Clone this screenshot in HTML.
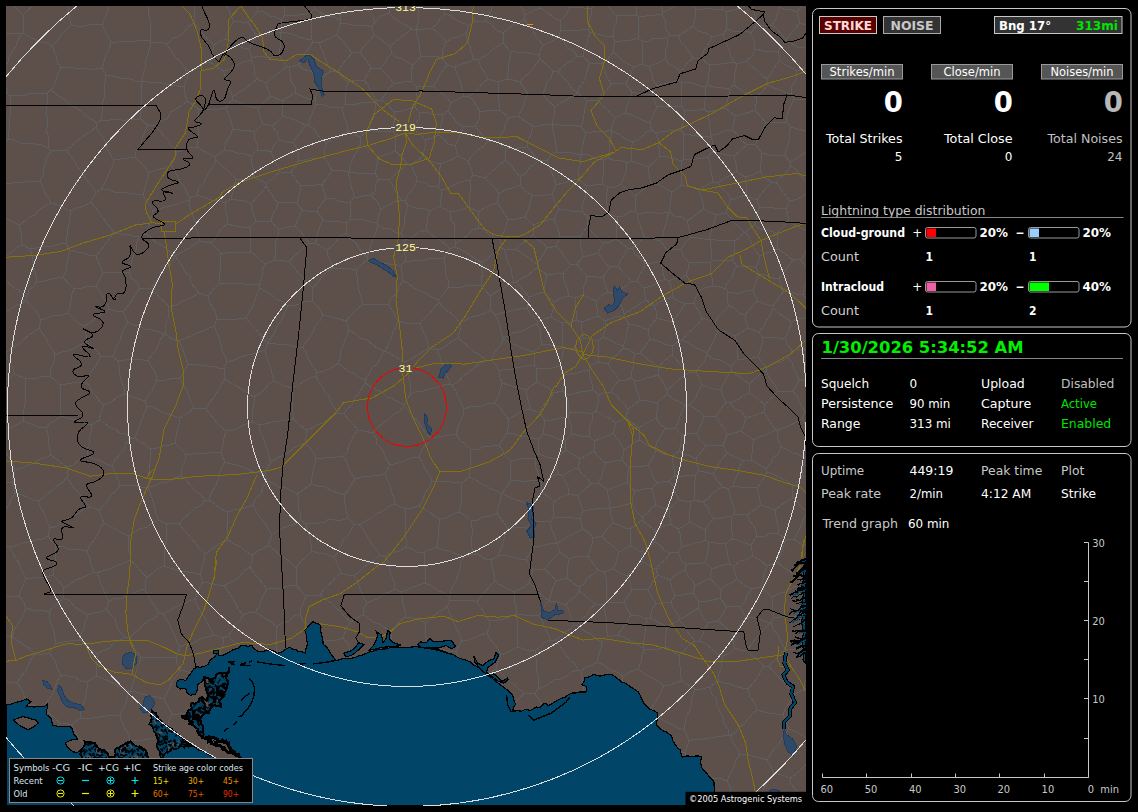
<!DOCTYPE html><html><head><meta charset="utf-8"><title>Lightning Monitor</title>
<style>html,body{margin:0;padding:0;background:#000;overflow:hidden}svg{display:block}text{font-family:"DejaVu Sans","Liberation Sans",sans-serif}.b{font-family:"DejaVu Sans Condensed","DejaVu Sans","Liberation Sans",sans-serif;font-weight:bold}.m{font-family:"Liberation Mono","DejaVu Sans Mono",monospace}.t{font-family:"DejaVu Sans Condensed","Liberation Sans",sans-serif}</style></head><body>
<svg width="1138" height="812" viewBox="0 0 1138 812">
<rect width="1138" height="812" fill="#000"/>
<defs><clipPath id="mc"><rect x="6" y="6" width="800" height="800"/></clipPath>
<pattern id="m1" width="24" height="24" patternUnits="userSpaceOnUse"><rect width="24" height="24" fill="#000"/><path d="M7.8 3.6l0.9 -2.6l0.2 -0.5z" fill="#5d4f4a" stroke="#5d4f4a" stroke-width="1.2"/><path d="M1.4 12.2l-2.8 -0.4l-2.6 -1.6z" fill="#5d4f4a" stroke="#5d4f4a" stroke-width="1.2"/><path d="M10.2 19.8l-2.3 -1.7l0.8 1.8z" fill="#5d4f4a" stroke="#5d4f4a" stroke-width="1.2"/><path d="M13.9 9.5l2.9 -2.7l2.2 -0.8z" fill="#5d4f4a" stroke="#5d4f4a" stroke-width="1.2"/><path d="M3.5 2.8l-1.1 1.9l-1.9 0.3z" fill="#5d4f4a" stroke="#5d4f4a" stroke-width="1.2"/><path d="M15.3 8.9l0.3 -2.6l-2.6 -1.2z" fill="#5d4f4a" stroke="#5d4f4a" stroke-width="1.2"/><path d="M16.3 10.3l-1.1 0.5l-0.3 -0.8z" fill="#5d4f4a" stroke="#5d4f4a" stroke-width="1.2"/><path d="M19.1 16.8l-1.5 0.4l0.2 1.5z" fill="#5d4f4a" stroke="#5d4f4a" stroke-width="1.2"/><path d="M17.5 6.9l2.9 -2.3l-0.5 1.0z" fill="#5d4f4a" stroke="#5d4f4a" stroke-width="1.2"/><path d="M3.6 11.7l-2.8 1.0l1.6 0.3z" fill="#014569" stroke="#014569" stroke-width="1.2"/><path d="M21.0 7.5l1.2 0.6l0.5 -0.2z" fill="#014569" stroke="#014569" stroke-width="1.2"/><path d="M20.2 22.7l-0.2 1.0l-2.6 0.8z" fill="#014569" stroke="#014569" stroke-width="1.2"/><path d="M15.5 23.8l1.9 -1.3l-0.7 0.7z" fill="#014569" stroke="#014569" stroke-width="1.2"/><path d="M0.5 11.1l-2.0 -2.3l-2.6 1.1z" fill="#014569" stroke="#014569" stroke-width="1.2"/><path d="M3.1 5.9l-0.7 2.2l-2.5 -0.2z" fill="#014569" stroke="#014569" stroke-width="1.2"/><path d="M13.2 21.2l1.9 2.2l-1.3 -0.3z" fill="#014569" stroke="#014569" stroke-width="1.2"/><path d="M8.6 21.2l2.7 -2.1l-1.9 -1.1z" fill="#014569" stroke="#014569" stroke-width="1.2"/><path d="M5.6 11.6l0.5 -1.4l-3.0 -0.3z" fill="#014569" stroke="#014569" stroke-width="1.2"/><path d="M8.9 13.6l2.7 1.1l0.1 0.5z" fill="#014569" stroke="#014569" stroke-width="1.2"/><path d="M16.2 1.3l2.4 1.7l2.2 1.2z" fill="#014569" stroke="#014569" stroke-width="1.2"/><path d="M9.4 9.6l-2.4 0.8l-2.6 -1.7z" fill="#014569" stroke="#014569" stroke-width="1.2"/><path d="M5.0 3.9l-1.0 -2.7l-3.0 -1.4z" fill="#014569" stroke="#014569" stroke-width="1.2"/><path d="M2.4 8.7l-2.8 2.2l0.7 -1.4z" fill="#014569" stroke="#014569" stroke-width="1.2"/><path d="M6.1 8.3l-0.8 -2.3l2.1 2.0z" fill="#014569" stroke="#014569" stroke-width="1.2"/><path d="M11.2 11.6l-2.5 -2.4l-0.9 -0.9z" fill="#014569" stroke="#014569" stroke-width="1.2"/><path d="M19.9 3.9l-2.9 2.7l0.2 -1.4z" fill="#014569" stroke="#014569" stroke-width="1.2"/><path d="M13.0 0.6l0.2 2.9l2.2 0.8z" fill="#014569" stroke="#014569" stroke-width="1.2"/><path d="M6.3 8.8l-2.0 1.6l0.2 1.1z" fill="#014569" stroke="#014569" stroke-width="1.2"/><path d="M7.9 5.4l1.9 2.9l2.1 1.2z" fill="#014569" stroke="#014569" stroke-width="1.2"/><path d="M19.6 17.8l-1.6 0.1l-0.9 -1.9z" fill="#014569" stroke="#014569" stroke-width="1.2"/><path d="M0.7 6.7l-1.4 1.2l2.7 -0.2z" fill="#014569" stroke="#014569" stroke-width="1.2"/><path d="M22.5 23.7l2.7 -0.8l-1.7 -1.1z" fill="#014569" stroke="#014569" stroke-width="1.2"/><path d="M4.7 4.9l0.7 2.4l2.0 -0.1z" fill="#014569" stroke="#014569" stroke-width="1.2"/><path d="M15.7 19.2l-2.5 1.0l2.5 1.1z" fill="#014569" stroke="#014569" stroke-width="1.2"/><path d="M18.0 11.5l-1.9 1.7l-1.0 1.2z" fill="#014569" stroke="#014569" stroke-width="1.2"/><path d="M23.3 9.5l-0.6 2.7l1.3 -1.3z" fill="#014569" stroke="#014569" stroke-width="1.2"/><path d="M3.0 3.6l2.4 1.8l-2.1 1.3z" fill="#014569" stroke="#014569" stroke-width="1.2"/><path d="M23.5 15.8l-0.9 0.3l-2.2 -1.9z" fill="#014569" stroke="#014569" stroke-width="1.2"/><path d="M23.3 15.6l0.2 2.6l-0.4 1.5z" fill="#014569" stroke="#014569" stroke-width="1.2"/><path d="M19.8 5.1l-1.5 -1.2l-1.6 0.3z" fill="#014569" stroke="#014569" stroke-width="1.2"/><path d="M6.2 10.1l-2.2 2.5l-0.9 -0.2z" fill="#014569" stroke="#014569" stroke-width="1.2"/><path d="M14.0 21.7l-0.5 2.5l0.0 0.1z" fill="#014569" stroke="#014569" stroke-width="1.2"/><path d="M12.6 0.4l-0.4 -1.9l-3.0 1.2z" fill="#014569" stroke="#014569" stroke-width="1.2"/><path d="M4.1 11.4l1.4 0.3l-1.0 0.1z" fill="#014569" stroke="#014569" stroke-width="1.2"/><path d="M13.3 18.8l-2.4 0.4l-1.5 -0.9z" fill="#014569" stroke="#014569" stroke-width="1.2"/><path d="M18.5 12.2l0.4 1.6l2.5 -0.2z" fill="#014569" stroke="#014569" stroke-width="1.2"/><path d="M14.7 12.1l0.1 1.2l-0.3 0.1z" fill="#014569" stroke="#014569" stroke-width="1.2"/><path d="M11.5 22.6l1.2 2.3l2.7 -1.0z" fill="#014569" stroke="#014569" stroke-width="1.2"/><path d="M13.4 22.6l2.0 -2.2l-2.3 -0.2z" fill="#014569" stroke="#014569" stroke-width="1.2"/><path d="M1.7 5.8l-2.6 1.0l1.7 1.6z" fill="#014569" stroke="#014569" stroke-width="1.2"/><path d="M3.7 17.2l1.0 -2.1l2.3 1.9z" fill="#014569" stroke="#014569" stroke-width="1.2"/></pattern>
<pattern id="m2" width="24" height="24" patternUnits="userSpaceOnUse"><rect width="24" height="24" fill="#014569"/><path d="M5.3 22.9l-0.6 -0.1l2.9 1.3z" fill="#5d4f4a" stroke="#5d4f4a" stroke-width="1.2"/><path d="M3.9 10.4l0.1 -1.0l-1.8 -0.7z" fill="#5d4f4a" stroke="#5d4f4a" stroke-width="1.2"/><path d="M17.3 0.5l0.3 -0.4l-2.9 -0.7z" fill="#5d4f4a" stroke="#5d4f4a" stroke-width="1.2"/><path d="M15.0 12.3l-2.6 2.9l1.7 1.9z" fill="#5d4f4a" stroke="#5d4f4a" stroke-width="1.2"/><path d="M2.5 6.4l-2.8 1.7l-1.4 -1.5z" fill="#5d4f4a" stroke="#5d4f4a" stroke-width="1.2"/><path d="M10.1 21.9l1.9 -1.4l-2.1 1.7z" fill="#5d4f4a" stroke="#5d4f4a" stroke-width="1.2"/><path d="M13.7 16.8l-2.5 -2.7l1.1 -0.3z" fill="#5d4f4a" stroke="#5d4f4a" stroke-width="1.2"/><path d="M1.7 22.5l0.8 1.8l-2.5 1.4z" fill="#5d4f4a" stroke="#5d4f4a" stroke-width="1.2"/><path d="M1.6 20.7l-0.3 -1.0l0.3 1.7z" fill="#5d4f4a" stroke="#5d4f4a" stroke-width="1.2"/><path d="M6.4 3.1l0.2 -1.6l-2.3 -1.4z" fill="#5d4f4a" stroke="#5d4f4a" stroke-width="1.2"/><path d="M1.2 4.8l-1.1 -1.2l1.6 -0.8z" fill="#5d4f4a" stroke="#5d4f4a" stroke-width="1.2"/><path d="M12.0 4.3l-0.9 -2.9l-1.5 -1.9z" fill="#5d4f4a" stroke="#5d4f4a" stroke-width="1.2"/><path d="M17.6 13.2l-1.9 -0.2l2.6 -1.6z" fill="#5d4f4a" stroke="#5d4f4a" stroke-width="1.2"/><path d="M19.7 10.4l-0.0 2.0l-0.6 0.0z" fill="#5d4f4a" stroke="#5d4f4a" stroke-width="1.2"/><path d="M16.5 23.6l-0.8 1.7l1.0 0.7" fill="none" stroke="#000" stroke-width="1.5"/><path d="M9.7 8.3l-2.2 -1.9l-2.1 1.2" fill="none" stroke="#000" stroke-width="1.5"/><path d="M6.1 3.9l-2.1 1.7l1.9 0.9" fill="none" stroke="#000" stroke-width="1.5"/><path d="M6.8 5.8l-1.0 -0.2l-1.7 -0.3" fill="none" stroke="#000" stroke-width="1.5"/><path d="M6.3 23.1l2.4 0.2l-1.3 2.3" fill="none" stroke="#000" stroke-width="1.5"/><path d="M7.4 8.6l-2.5 -0.6l-0.1 0.0" fill="none" stroke="#000" stroke-width="1.5"/><path d="M4.8 12.1l-2.5 -1.2l-2.1 -0.5" fill="none" stroke="#000" stroke-width="1.5"/><path d="M1.0 0.5l-1.0 -1.3l0.4 0.1" fill="none" stroke="#000" stroke-width="1.5"/><path d="M18.0 15.8l1.1 1.9l-0.6 -0.9" fill="none" stroke="#000" stroke-width="1.5"/><path d="M23.6 3.6l1.1 0.7l-2.3 1.7" fill="none" stroke="#000" stroke-width="1.5"/><path d="M21.4 15.1l1.2 1.6l-1.8 0.1" fill="none" stroke="#000" stroke-width="1.5"/><path d="M12.1 20.0l1.5 1.6l0.4 2.0" fill="none" stroke="#000" stroke-width="1.5"/><path d="M16.4 16.6l-1.4 -2.3l-1.8 -0.7" fill="none" stroke="#000" stroke-width="1.5"/><path d="M2.5 20.1l0.3 0.6l0.6 0.9" fill="none" stroke="#000" stroke-width="1.5"/><path d="M11.7 0.1l1.5 1.2l0.0 0.2" fill="none" stroke="#000" stroke-width="1.5"/><path d="M15.8 1.6l1.2 -1.2l-2.1 -1.2" fill="none" stroke="#000" stroke-width="1.5"/><path d="M17.5 4.9l1.2 2.4l-0.0 -0.6" fill="none" stroke="#000" stroke-width="1.5"/><path d="M11.5 16.4l1.3 0.6l0.7 -2.1" fill="none" stroke="#000" stroke-width="1.5"/><path d="M3.5 6.1l1.2 -1.0l0.3 -2.4" fill="none" stroke="#000" stroke-width="1.5"/><path d="M1.5 6.5l0.9 1.0l0.9 -1.0" fill="none" stroke="#000" stroke-width="1.5"/><path d="M12.4 11.2l-0.2 -1.9l2.0 -1.5" fill="none" stroke="#000" stroke-width="1.5"/><path d="M23.5 22.5l-2.4 -0.2l1.6 2.3" fill="none" stroke="#000" stroke-width="1.5"/><path d="M10.8 6.4l-1.5 2.2l-1.4 0.4" fill="none" stroke="#000" stroke-width="1.5"/><path d="M3.4 12.6l2.3 -1.8l1.6 0.0" fill="none" stroke="#000" stroke-width="1.5"/><path d="M21.3 16.9l-1.3 2.0l-0.1 -2.4" fill="none" stroke="#000" stroke-width="1.5"/><path d="M0.1 11.8l-0.2 -1.0l-1.8 -0.8" fill="none" stroke="#000" stroke-width="1.5"/><path d="M7.6 20.2l-2.5 1.3l1.7 -1.9" fill="none" stroke="#000" stroke-width="1.5"/><path d="M22.2 17.1l2.0 -1.1l-0.6 -0.5" fill="none" stroke="#000" stroke-width="1.5"/><path d="M24.0 14.1l-0.7 -0.4l-1.1 -2.3" fill="none" stroke="#000" stroke-width="1.5"/><path d="M2.4 20.0l-1.1 2.2l-1.3 -1.2" fill="none" stroke="#000" stroke-width="1.5"/><path d="M12.3 4.6l-0.6 2.3l1.9 1.6" fill="none" stroke="#000" stroke-width="1.5"/><path d="M15.1 21.9l2.2 0.2l1.1 -2.3" fill="none" stroke="#000" stroke-width="1.5"/><path d="M17.6 10.8l1.3 0.7l-1.1 -2.3" fill="none" stroke="#000" stroke-width="1.5"/><path d="M22.2 3.1l-0.1 -0.8l-1.0 1.2" fill="none" stroke="#000" stroke-width="1.5"/><path d="M23.4 6.2l0.8 -1.0l0.3 -0.5" fill="none" stroke="#000" stroke-width="1.5"/><path d="M4.0 3.9l-1.5 2.0l-0.0 -1.4" fill="none" stroke="#000" stroke-width="1.5"/><path d="M21.8 23.9l-0.3 -1.8l-1.5 -2.0" fill="none" stroke="#000" stroke-width="1.5"/><path d="M8.2 2.2l-1.3 -1.2l0.3 1.9" fill="none" stroke="#000" stroke-width="1.5"/><path d="M18.0 9.9l-0.4 0.1l-0.6 -0.8" fill="none" stroke="#000" stroke-width="1.5"/><path d="M1.5 6.7l2.3 -1.9l0.0 0.6" fill="none" stroke="#000" stroke-width="1.5"/><path d="M20.7 5.2l-1.1 -1.3l-0.5 -0.3" fill="none" stroke="#000" stroke-width="1.5"/><path d="M22.9 20.4l1.9 -2.4l-2.3 1.0" fill="none" stroke="#000" stroke-width="1.5"/><path d="M21.5 11.4l0.4 -2.5l-0.5 2.1" fill="none" stroke="#000" stroke-width="1.5"/><path d="M19.8 20.5l2.4 -1.3l-2.0 -1.7" fill="none" stroke="#000" stroke-width="1.5"/><path d="M12.5 16.4l2.2 1.1l0.7 1.3" fill="none" stroke="#000" stroke-width="1.5"/><path d="M11.0 13.2l-2.3 1.4l-1.3 2.1" fill="none" stroke="#000" stroke-width="1.5"/><path d="M15.5 7.3l-1.9 -1.2l0.7 1.0" fill="none" stroke="#000" stroke-width="1.5"/><path d="M2.7 1.7l0.1 0.4l-0.6 -1.4" fill="none" stroke="#000" stroke-width="1.5"/><path d="M14.4 0.3l-1.0 -0.2l2.3 0.7" fill="none" stroke="#000" stroke-width="1.5"/><path d="M21.2 11.4l-1.3 -1.3l2.3 1.0" fill="none" stroke="#000" stroke-width="1.5"/><path d="M7.4 0.5l-0.0 0.9l-0.4 -1.2" fill="none" stroke="#000" stroke-width="1.5"/><path d="M16.0 22.2l-1.4 -2.3l-0.8 -0.4" fill="none" stroke="#000" stroke-width="1.5"/><path d="M16.4 4.8l1.5 1.2l0.0 -1.5" fill="none" stroke="#000" stroke-width="1.5"/><path d="M23.3 7.5l1.6 -1.3l-1.4 1.3" fill="none" stroke="#000" stroke-width="1.5"/><path d="M7.1 22.8l-0.0 -1.6l-1.4 -0.4" fill="none" stroke="#000" stroke-width="1.5"/><path d="M16.0 22.8l-1.8 -0.5l-1.4 2.4" fill="none" stroke="#000" stroke-width="1.5"/><path d="M3.4 1.2l-2.2 -0.5l2.0 1.9" fill="none" stroke="#000" stroke-width="1.5"/><path d="M17.6 23.9l2.2 -0.9l-1.6 2.2" fill="none" stroke="#000" stroke-width="1.5"/><path d="M17.9 0.8l0.8 -0.6l-0.6 -0.8" fill="none" stroke="#000" stroke-width="1.5"/><path d="M4.1 0.1l-1.1 -0.7l2.3 -1.9" fill="none" stroke="#000" stroke-width="1.5"/></pattern>
</defs>
<g clip-path="url(#mc)" shape-rendering="crispEdges">
<rect x="6" y="6" width="800" height="800" fill="#5d4f4a"/>
<path d="M56 644L49 653M56 644L55 638L54 632L52 626L49 619L49 612M49 653L43 654L35 654M35 654L30 649L24 645L18 641L12 637M12 637L14 630L17 626L21 619L24 613L26 608M49 612L42 610L33 610L26 608M30 704L25 708L22 713L16 718L12 722L8 726M30 704L26 700L24 695L21 688L17 683M17 683L9 682L2 681L-5 681L-12 680M-4 724L8 726M35 654L30 661L28 666L25 672L20 678L17 683M12 637L5 636L-2 638M-8 265L-1 261L3 259L7 255L12 252L17 247L23 245M-1 212L5 218L11 221L19 225M19 225L21 233L21 238L23 245M-1 183L6 183L12 183L20 182L25 182L32 181L40 181M40 181L43 187L45 193L48 197L51 203M51 203L45 206L39 210L35 215L29 217L25 221L19 225M26 608L23 601L19 596M19 596L13 597L7 596L-0 597L-6 596L-11 596M-17 557L-11 554L-5 553L-0 549L5 546M5 546L9 547M19 596L21 590L23 585L26 579M9 547L12 552L16 559L19 563L21 569L23 573L26 579M90 507L84 509L78 514L74 516L67 519L61 522L57 526L50 528M90 507L86 503L83 498L79 493L74 488L70 482L67 477M67 477L63 482L57 486L53 490L47 494L43 498L38 501M50 528L47 522L45 515L41 508L38 501M23 421L31 424L38 427L46 428M23 421L18 424L13 427L6 428M51 455L50 449L48 443L48 435L46 428M51 455L45 458L40 459L34 463L28 465L22 468L15 470M6 428L0 438M15 470L13 464L8 456L6 451L3 445L0 438M6 428L3 422L-1 417L-5 412L-8 406L-12 401L-14 396M0 438L-8 440L-16 442M158 824L165 821L170 819L176 815L183 812L189 810L196 806M196 806L197 811L199 818L200 825L202 833L204 838L205 845L206 851L208 858M86 791L94 792L102 795L109 795M86 791L82 797L79 802L74 809L71 815L68 822M117 821L115 815L113 808L111 801L109 795M211 713L214 706L216 702L216 694L218 688M211 713L206 713L198 713L193 713L185 713L178 714L172 714M172 714L168 706L164 699M180 670L177 676L172 681L170 688L167 693L164 699M180 670L185 671L193 674L198 676L203 679L209 680L215 683M215 683L218 688M-24 748L-19 752L-14 756L-10 762L-4 766L1 771M8 726L12 733L14 739L18 747M18 747L14 754L10 759L4 765L1 771M128 779L135 781L142 783L148 785M128 779L127 773L126 764L126 757L124 751M148 785L154 783L160 781L167 777M124 751L130 741M130 741L137 740L143 740L151 738L156 738L163 737M167 777L169 771L169 765L172 758L173 752M163 737L166 743L170 748L173 752M154 823L152 817L153 811L151 803L151 797L149 792L148 785M109 795L114 790L118 788L123 783L128 779M86 791L81 783L77 777M77 777L79 769L80 763L82 756L85 750M85 750L92 751L99 750L105 750L111 751L119 750L124 751M196 806L198 801M198 801L192 798L187 793L182 790L177 785L172 781L167 777M172 714L169 720L168 725L165 731L163 737M164 699L157 697L150 696L142 694L136 692L130 691M130 691L129 691M120 715L123 709L126 703L127 698L129 691M120 715L122 722L124 727L129 735L130 741M206 752L209 757L214 764L216 770M206 752L200 752L193 752L186 752L180 752L173 752M216 770L215 777L214 786L212 793M212 793L205 797L198 801M211 713L216 722M216 722L215 728L213 735L211 740L207 745L206 752M180 670L177 663L176 658M130 691L133 684L135 676L136 672L139 664L141 657M176 658L169 657L161 657L154 657L149 657L141 657M56 644L63 642L70 641L79 640M49 612L53 607L58 604L63 598M79 640L81 634L84 628L85 622L88 615M88 615L81 611L75 607L70 601L63 598M61 675L67 676L74 677L81 681L88 681M61 675L57 681L55 688L52 695L48 700L45 707M88 681L87 688L86 694L85 699L82 707L81 711L80 718M45 707L50 714L55 718L60 724M60 724L65 723L72 725M72 725L80 718M49 653L53 658L56 663L57 668L61 675M79 640L85 643L91 649L98 654M98 654L97 660L96 669L97 676M97 676L88 681M30 704L37 706L45 707M97 676L104 679L109 681L116 685L124 688L129 691M120 715L114 715L106 716L100 717L93 718L87 719L80 718M40 749L32 748L26 747L18 747M40 749L43 744L47 740L53 733L55 728L60 724M77 777L69 776L62 776L55 774L48 775M85 750L83 743L78 737L75 731L72 725M40 749L42 755L45 762L47 769L48 775M825 512L817 512L808 512M808 512L802 508L798 503L793 498M830 483L824 482L816 480L810 477L803 476M793 498L792 491L793 486M803 476L798 481L793 486M810 151L816 153L822 157M810 151L810 145L807 137L806 131M806 131L817 126M-8 152L-4 147L4 144L8 139M-48 110L-42 107L-36 106L-30 103L-23 103L-17 100L-11 98L-5 97L2 96L7 93M7 93L10 96M8 139L8 133L10 127L9 120L10 115L10 109L10 101L10 96M7 93L6 87L3 81L2 74M-40 53L-35 56L-28 60L-23 61L-17 64L-10 68L-4 70L2 74M526 390L520 388L515 387L509 385L502 383M526 390L527 396L529 403L529 409M529 409L521 412L514 416L508 419M508 419L504 413L500 408L495 403M495 403L498 397L500 390L502 383M212 793L217 795L222 799L227 801L233 803L238 806L244 809M249 821L246 815L244 809M15 493L12 482M15 493L11 500L9 505L5 510L1 515M12 482L5 482L-2 481L-7 480L-15 478L-22 478L-27 479L-34 477L-41 477M1 515L-4 513L-11 511L-17 511L-22 510L-29 508L-35 506L-42 505L-47 503L-53 502L-60 499L-66 498L-72 498L-78 496M67 467L63 464L56 459L51 455M67 467L67 477M38 501L33 500L27 497L22 495L15 493M15 470L13 475L12 482M5 546L4 541L3 534L3 527L1 521L1 515M48 536L43 539L36 540L29 542L23 543L15 546L9 547M48 536L50 528M128 536L135 532L139 529L147 527L152 523L159 520M128 536L122 533L117 530L109 526L104 523M104 523L102 518L99 510M99 510L103 506L108 501L111 495L117 490L120 485M120 485L126 485L134 485L141 487L148 487M159 520L156 514L155 508L153 501L151 495L148 487M67 467L74 465L79 459L87 456M46 428L50 423L56 420L61 416M61 416L67 418L72 419L79 421L84 423L91 425M87 456L87 450L89 444L90 436L91 432L91 425M90 507L99 510M120 485L117 478L115 472L112 466M87 456L94 459L99 460L106 464L112 466M243 615L240 620L235 625L232 631L228 636M243 615L248 613L255 612M228 636L232 640L237 643L242 648L249 652L253 656L257 659L263 663M276 627L272 622L266 619L260 615L255 612M276 627L276 635L276 642L276 651M276 651L269 658L263 663M-2 788L1 794L4 800L10 806L13 811L16 818M-2 788L2 781M2 781L8 782L15 782L22 782L28 781L34 783L41 782M41 782L41 790L42 797L41 804L42 810L42 816M1 771L2 781M48 775L41 782M125 637L120 632L117 627L115 619L110 614L106 609M125 637L130 638M130 638L134 633L140 629L143 625L148 621L155 618L159 612M109 602L106 609M109 602L114 598L122 599L127 595L132 594L140 590L145 589M145 589L148 595L151 601L155 607L159 612M98 654L102 651L110 648L113 643L120 640L125 637M88 615L93 613L100 612L106 609M141 657L136 651L133 645L130 638M130 560L136 565L141 572L147 577M130 560L122 564L116 566L110 569L102 571L97 573M147 577L145 583L145 589M97 573L99 578L101 584L104 591L106 596L109 602M56 546L55 554L55 562L53 567L53 575M56 546L63 546L68 549L75 549L82 550L87 551M87 551L90 559L91 565L94 572M94 572L88 575L82 578L75 580L70 584L64 588M53 575L59 581L64 588M48 536L52 542L56 546M26 579L33 578L40 577L46 577L53 575M104 523L100 528L98 534L95 539L90 545L87 551M130 560L130 554L128 547L129 542L128 536M97 573L94 572M63 598L64 588M830 796L825 799L818 803L811 807M811 807L815 814L818 820L822 826L823 833L827 839M802 806L811 807M802 806L799 800L797 796L796 790L791 784L790 778M819 755L815 758L810 762L804 766L800 771L796 774L790 778M802 806L797 810L792 815L787 817L783 821M790 778L782 775L774 773M757 817L753 807M774 773L770 779L767 783L763 790L760 795L757 802L753 807M808 512L804 517L802 523L800 528L797 534L794 539M794 539L801 544L806 545L813 550M716 416L704 416M716 416L719 422L724 428L727 435M704 416L702 422L700 427L697 433M727 435L723 445M723 445L715 445L706 446M697 433L700 440L706 446M802 419L796 422L789 426L783 428L777 430M802 419L805 424L807 429L810 434L814 440L817 446M817 446L811 451L804 458M804 458L798 454L793 453L788 450L781 447M781 447L778 439L777 430M827 406L819 407L813 409L805 411M805 411L802 419M803 476L802 470L804 465L804 458M793 486L787 481L781 478L773 474L767 472M766 469L767 472M766 469L771 463L773 458L778 454L781 447M766 469L758 464L751 460M751 460L752 454L752 447L754 440M776 430L772 432L766 435L759 437L754 440M776 430L777 430M793 391L798 398L801 406L805 411M793 391L796 386L799 381M799 381L806 379L812 376L820 374M696 9L689 -0M696 9L703 9L708 8L716 10L723 9M722 -13L722 -5L722 1L723 9M806 131L797 129L791 127M791 127L786 122M819 98L813 99L806 99L799 99L794 99M786 122L787 115L789 110L791 105L794 99M823 80L818 75L813 71L807 67M807 67L797 71M797 71L796 79L792 86L791 94M794 99L791 94M51 203L58 205L64 208L70 211M23 245L30 249M70 211L70 217L69 224L68 229L67 236L66 243M66 243L60 244L53 246L48 246L42 247L36 248L30 249M395 589L394 582L391 575L390 570L388 562L385 557M395 589L390 592L383 594L379 598L372 601L367 603M354 576L357 581L359 586L361 591L364 598L367 603M354 576L359 572L364 567L370 563L375 560L380 555M380 555L385 557M406 547L399 551L391 553L385 557M406 547L406 540L405 533L406 527L405 521L406 515L405 509M359 525L363 529L367 536L370 541L373 546L377 550L380 555M359 525L364 522L373 517L376 514L383 511L388 507L395 504M395 504L405 509M358 430L354 435L351 441L349 445L347 452L343 456M358 430L353 424L348 419L344 414M338 413L344 414M338 413L333 415L327 420L323 423L317 425L312 428L306 430M343 456L337 457L330 457L324 458L316 458M316 458L313 452L309 447L305 443M305 443L306 437L306 430M373 433L364 431L358 430M373 433L376 438L377 444L381 448L384 453L386 459L390 465M355 479L351 473L349 469L347 462L343 456M355 479L362 477L366 476L372 476L380 475L385 474M385 474L390 465M344 495L339 493L332 491L325 487L318 486L311 484M344 495L349 489L351 485L355 479M311 484L312 477L313 471L315 463L316 458M271 462L277 458L282 456L289 452L294 448L300 445L305 443M271 462L269 457L267 449L265 443L263 437L260 431L259 425M259 425L265 424L272 422L279 421L287 420L293 419M293 419L299 424L306 430M553 393L562 391M553 393L549 388L542 385L537 382M562 391L564 383L565 375M537 368L536 376L537 382M537 368L544 368L552 368L560 366M560 366L565 375M540 413L542 407L546 402L551 398L553 393M540 413L529 409M526 390L531 386L537 382M593 390L592 384L590 377L589 370M593 390L587 391L580 392L573 394L566 394M566 394L562 391M589 370L582 371L577 373L570 374L565 375M635 354L630 350L623 348M635 354L633 360L634 365L631 372L631 378M623 348L618 354L612 358L608 364M608 364L611 369L616 375L619 380M619 380L626 380L631 378M640 353L645 357L649 360L654 364L659 367M640 353L635 354M659 367L658 375M658 375L651 377L646 378L641 380L634 380M631 378L634 380M502 383L500 378L499 371M537 368L534 365M499 371L507 369L513 369L520 367L526 366L534 365M542 344L550 345L555 346L562 347M542 344L534 352M562 347L564 349M564 349L562 358L560 366M534 365L534 358L534 352M216 722L221 725L229 725L234 727L240 729L247 729L252 732L258 733M216 770L222 769L228 766L235 764L242 762L250 761L256 759M256 759L256 752L256 745L257 740L258 733M244 809L247 803L251 797L256 792L260 787L263 780L266 775M256 759L259 764L262 769L266 775M-8 318L-2 315L2 311L10 310L15 306L22 303L26 300M-7 271L-2 275L2 277L7 282L11 285L16 289L23 293L27 297M27 297L26 300M30 249L32 256L33 262L34 268L36 276L37 281M37 281L34 286L29 290L27 297M147 577L153 573L157 569L164 566M159 520L167 524M167 524L166 530L167 536L166 543L165 549L164 554L165 561L164 566M167 524L179 523M179 523L183 529L188 534L191 538L196 544L200 549L205 554M164 566L170 568L176 570L182 571L188 572L194 573L200 575M205 554L204 561L202 567L200 575M293 419L293 413L292 406L293 399L292 394L292 388M338 413L334 407L331 402L329 396L325 392L322 386L318 381L316 376M292 388L299 385L303 382L310 378L316 376M150 449L157 448L163 446L170 445L175 443M150 449L145 444L140 442L135 438M175 443L176 437L177 431L179 425L180 418M180 418L174 416L167 414L160 411L154 407L147 406M147 406L145 412L142 419L140 425L137 432L135 438M148 487L148 487M112 466L115 460L120 454L124 450L126 444L130 438M148 487L149 481L150 475L149 468L150 462L151 456L150 449M135 438L130 438M91 425L99 420M130 438L126 434L120 433L116 430L109 427L104 423L99 420M163 614L167 620L170 626L172 630L175 636L177 642L180 647M163 614L169 611L175 607L183 604L188 602L195 599M195 599L197 605L201 612L204 616L207 622L210 628L214 635M180 647L186 644L194 643L200 639L207 637L214 635M176 658L178 652L180 647M159 612L163 614M203 582L200 575M203 582L200 587L197 594L195 599M243 615L238 609L236 604L232 597L228 591L224 586M223 638L228 636M223 638L214 635M224 586L218 585L209 583L203 582M215 683L217 677L218 671L217 663L219 658L221 650L223 644L223 638M774 773L770 765L767 760M767 760L770 755L774 749L779 744L781 740L785 734L789 729M816 742L810 739L806 737L800 734L795 731L789 729M767 760L760 758L752 756L746 754L740 754M753 807L748 803L741 800L737 796L731 794M731 794L730 787L727 781M740 754L736 760L734 767L730 774L727 781M827 654L818 656L811 656M836 630L832 628L824 624L820 622L813 619L808 616M808 616L805 623L805 629L805 637L803 643L802 649M811 656L802 649M678 552L681 560L686 565M678 552L681 547M706 540L701 542L695 543L689 545L681 547M706 540L708 542M708 542L708 550L707 556L705 562M686 565L691 563L699 564L705 562M725 544L727 550L728 557L730 564M725 544L716 543L708 542M730 564L724 565L717 567L712 569M712 569L705 562M490 621L498 620L504 619L509 617L516 614M490 621L486 616L484 612L480 607L477 602M516 614L516 607L514 599L514 592M514 592L506 588L502 586L495 581M477 602L481 596L485 592L490 586L495 581M404 406L400 411L393 415L388 420L383 423L377 428L373 433M404 406L409 411L413 416L418 422L422 428L426 433L430 438M390 465L398 463L404 461L411 458L419 457M430 438L427 444L422 449L419 457M657 483L652 488M657 483L662 482L669 481M652 488L654 496L656 505M656 505L663 508L669 509M669 509L675 504L679 500M669 481L674 487L676 494L679 500M726 402L723 396L721 389M726 402L721 409L716 416M721 389L714 389L708 387L702 385M704 416L700 412L694 408L689 405M689 405L695 399L698 392L702 385M727 435L734 433L741 431M723 445L727 453M751 460L743 461M741 431L746 435L754 440M727 453L735 457L743 461M757 488L761 483L764 478L767 472M757 488L751 487L745 487L739 487L733 486M743 461L739 468L738 474L735 480L733 486M697 433L689 433L682 435M689 405L685 405M685 405L682 411L680 416L678 423L675 428M675 428L682 435M594 451L587 455L580 459M594 451L599 458L606 463M578 468L580 459M578 468L582 474L587 478L591 484M606 463L603 470L602 476L598 483M591 484L598 483M611 392L616 395L620 400L624 404L628 409M611 392L614 386L619 380M634 380L636 388L638 393L640 400M628 409L634 405L640 400M658 375L663 382L667 390M667 394L667 390M667 394L662 398L657 403M657 403L647 401L640 400M657 483L653 477L651 471L648 465M652 488L645 489L635 491M648 465L641 467L635 466L628 467M628 467L628 474L627 482M635 491L631 488L627 482M606 463L615 461L622 460M622 460L628 467M598 483L607 490M627 482L621 485L615 487L607 490M764 412L759 414L753 416L746 418M764 412L765 405M765 405L759 400L755 396L749 393M746 418L742 412L735 409L730 403M730 403L737 400L743 396L749 393M776 430L772 425L768 419L764 412M741 431L744 425L746 418M793 391L785 392L778 391M778 391L774 396L769 400L765 405M726 402L730 403M778 391L775 385L769 377L766 371M749 393L749 384M749 384L755 379L759 375L766 371M721 389L724 383L727 377L731 371M749 384L743 379L737 375L731 371M799 381L797 375L794 369L792 363L788 358M788 358L780 362L774 363L766 367M766 367L766 371M762 337L762 344L760 351L758 357M762 337L769 337L778 338L785 338M788 358L792 351M758 357L762 362L766 367M785 338L788 345L792 351M792 351L798 349L806 350L811 347L819 347M529 297L527 308M529 297L537 294L544 292M527 308L530 314L534 318L538 322M538 322L544 319L551 317M544 292L549 297L554 302M554 302L553 309L551 317M538 322L537 324M537 324L540 330L540 336L542 344M562 347L562 342L562 336L563 330L562 323M551 317L556 320L562 323M544 292L545 283L547 275M569 296L561 298L554 302M569 296L567 288L564 280L563 273M563 273L554 274L547 275M529 297L524 291L520 286L516 282M516 282L522 278L527 276L533 271L537 268M547 275L543 272L537 268M810 52L817 48L821 44L826 41M810 52L809 59L807 67M823 162L821 167L816 171L812 177L809 182M813 194L811 192M811 192L809 182M786 122L779 122L771 122L766 123M791 94L786 93L780 90L774 88L768 85M766 123L761 117L755 110M768 85L762 92L756 97M755 110L756 104L756 97M256 221L250 227M256 221L253 213L251 204M250 227L242 227L236 226L227 224M251 204L245 201L237 200L231 199M231 199L225 203M227 224L227 217L225 209L225 203M21 34L14 33L7 34L0 32L-6 31L-12 32L-20 31M21 34L23 33M23 33L24 28L23 21L23 15M23 15L18 10L14 6L10 1L6 -6L2 -10M2 74L4 68L8 62L9 57L13 51L16 46L18 40L21 34M52 -12L47 -8L42 -4L37 2L33 6L27 11L23 15M91 202L95 207L99 212L102 217L107 223L110 227L114 232M91 202L96 193M96 193L101 189M114 232L121 234L126 234L133 236L139 237M139 237L146 234M146 234L149 226L151 219L153 211M153 211L150 205L146 201L143 195M143 195L135 194L128 193L122 192L114 192L107 189L101 189M177 152L175 158L171 165M177 152L172 147L169 141L164 136L160 131L155 126M171 165L165 168L156 170L149 173M155 126L148 125M148 125L145 131L142 139L141 145L136 151L135 157M135 157L141 163L145 167L149 173M190 198L189 200M190 198L187 193L184 186L180 182L178 177L174 170L171 165M153 211L159 209L165 207L171 206L177 204L183 202L189 200M143 195L145 187L147 181L149 173M101 189L105 183L107 178L109 173L113 165L114 160M114 160L121 159L128 158L135 157M66 243L70 250M37 281L45 281L51 279L57 278L63 277M70 250L68 258L67 263L66 271L63 277M91 202L84 206L77 208L70 211M114 232L110 238L105 245L101 250L96 256M70 250L77 252L83 253L89 255L96 256M129 272L130 267L132 260L134 254L136 250L137 242L139 237M129 272L123 273L115 272L109 272L103 273M96 256L98 261L100 266L103 273M404 406L404 405M344 414L347 409L352 405L355 398L359 393L362 388L365 383M365 383L371 387L377 390L382 392L387 397L392 398L398 402L404 405M450 249L446 245L440 240L436 238L431 234L426 230M450 249L444 258M444 258L438 258L431 258L425 260L417 260L412 261L405 261M405 261L405 255L404 248L405 240M426 230L419 232L413 237L405 240M256 221L263 221L271 221M250 227L251 233L250 240L250 247L251 252M274 260L276 255L275 247L276 241L278 236L278 229M274 260L266 264M251 252L256 256L261 261L266 264M271 221L278 229M589 436L589 428L592 421L593 413M589 436L581 436L572 434M572 434L571 425L568 417M593 413L586 413L577 412L570 412M570 412L568 417M594 451L594 441M580 459L574 455L566 450M594 441L589 436M566 450L565 441M565 441L572 434M545 421L551 420L561 418L568 417M545 421L544 427L543 434M543 434L551 436L558 439L565 441M593 390L599 395M599 395L598 403L596 411M566 394L568 401L568 406L570 412M596 411L593 413M540 413L545 421M598 341L590 339L583 338M598 341L599 348L598 356L598 362M598 362L590 366M590 366L586 360L581 357L578 352L573 348M573 348L578 342L583 338M623 346L617 344L610 340L603 337M623 346L623 348M608 364L598 362M603 337L598 341M599 395L605 392L611 392M589 370L590 366M564 349L573 348M460 323L466 320L471 317L480 315L485 313L491 310M460 323L460 331L458 338M458 338L463 342L470 348L474 352L480 355L486 360M495 315L491 310M495 315L498 320L500 326L501 331L503 338M503 338L503 339M503 339L500 346L497 349L494 354L491 360M486 360L491 360M527 308L520 309L514 310L507 312L501 313L495 315M537 324L531 326L525 330L519 332L514 332L508 336L503 338M534 352L527 350L520 347L516 345L508 342L503 339M499 371L496 365L491 360M464 409L469 407L477 406L483 406L489 403L495 403M464 409L461 403L458 397L456 391L452 385M452 385L458 382L463 376L469 372L474 368L480 363L486 360M354 805L353 799L352 791L351 785L351 777M354 805L360 805L366 805L373 805L379 805L385 804L391 805L397 805M351 777L355 774L362 772L368 770L374 768L379 764M379 764L382 768L386 775L390 780L394 786L398 791M397 805L397 797L398 791M344 819L349 812L354 805M398 819L400 810M400 810L397 805M283 818L286 811L291 803M266 775L273 776L279 778M279 778L282 785L286 791L287 796L291 803M327 817L323 811L320 807L315 802M291 803L297 804L304 803L309 803L315 802M539 616L531 615L525 615L516 614M539 616L542 621L545 628L548 634L551 640M516 614L517 621L517 627L518 635L517 640L518 647M551 640L545 642L540 647L535 651M535 651L526 650L518 647M549 601L544 597L538 592L534 588L529 583M549 601L545 605L542 611L539 616M516 614L516 614M529 583L522 588L514 592M549 601L549 601M555 640L560 637L564 633L570 629L574 625M555 640L551 640M574 625L571 618L569 611L566 605M549 601L557 602L566 605M400 810L407 811L414 812L419 813L425 813L433 813L439 814M61 416L60 409L60 404L60 398L61 390L60 385M60 385L66 384L72 383L78 382L85 382M99 420L101 413L104 405M85 382L90 386L92 392L96 396L100 402L104 405M147 406L145 401M145 401L139 399L130 396L124 394M104 405L111 402L117 397L124 394M181 476L181 469L185 461L186 454M181 476L186 480L191 486L195 491L200 494L205 500M186 454L193 454L199 453L208 453L214 452L221 452M205 500L209 500M209 500L211 493L215 487L218 480L219 474L222 467L225 462M225 462L221 452M148 487L154 486L162 482L167 482L174 478L181 476M175 443L180 448L186 454M179 523L183 519L190 513L195 508L201 506L205 500M194 408L188 413L180 418M194 408L206 409M226 431L221 427L217 423L214 419L210 414L206 409M226 431L224 438L223 445L221 452M227 512L220 508L215 504L209 500M227 512L227 520L227 526L227 534L228 540M228 540L221 543L216 546L211 550L205 554M271 462L267 469L265 475M265 475L259 473L254 472L249 470L243 467L237 465L232 464L225 462M259 425L253 422M226 431L234 430L240 427L246 424L253 422M129 272L132 279L137 282L140 288M140 288L151 288M146 234L152 238L155 242L161 245L166 248L170 252L175 256M151 288L155 283L159 277L162 271L167 268L172 262L175 256M303 347L296 347L289 345L283 344L276 344L268 343M303 347L306 342L310 337L313 332L315 326L320 321L323 315M268 343L271 338L275 332L276 328L281 321L283 317L285 312L288 306M288 306L296 305L304 302L312 301M323 315L318 307L312 301M274 260L281 260L289 262M289 262L293 266L298 273L303 278L307 282L313 288M266 264L262 270L262 277L259 284M259 284L260 288M260 288L265 291L272 295L276 299L283 302L288 306M313 288L312 294L312 301M803 690L805 682L807 678L808 670L809 664L811 656M803 690L810 692L816 694L823 695L828 697M783 714L786 707L790 702L795 694M783 714L776 714L769 713L764 712L757 710M795 694L790 690L787 684L781 680L778 676L772 670L769 666M757 710L755 703L750 697L748 689M748 689L753 683L757 678L761 671L764 666M769 666L764 666M789 729L786 722L783 714M803 690L795 694M740 754L737 748L733 743L730 736M730 736L736 732L739 728L745 723L748 719L752 714L757 710M802 649L793 649L785 649M785 649L780 655L775 660L769 666M730 736L729 735M729 735L728 729L724 724L723 717L720 712L717 705L716 698L712 694L710 687M710 687L718 681M718 681L724 683L730 684L735 686L742 688L748 689M718 681L719 674L721 668L721 663L723 656M723 656L730 653L735 648M735 648L740 650L747 650M747 650L753 656L759 661L764 666M785 649L781 642L778 635L773 629L771 623M771 623L770 623M770 623L764 629L760 634L755 639L752 644L747 650M710 687L702 689L695 689M695 689L687 684L682 681M695 641L699 641M695 641L689 645L683 652L679 655M699 641L706 644L712 649L716 653L723 656M679 655L679 662L681 669L680 674L682 681M643 648L644 640L645 634L645 627L647 619M643 648L638 645L631 641L625 638L618 635M618 635L621 630L625 625L627 621L631 615M647 619L639 616L631 615M574 625L577 625M577 625L582 619L587 615L590 609L596 604M566 605L569 601L576 596L579 591M579 591L586 596L591 601L596 604M607 637L607 631L606 623L606 617L605 612L604 605M607 637L602 642M602 642L596 639L591 634L586 632L582 629L577 625M596 604L604 605M607 637L618 635M624 602L617 603L607 602M624 602L627 609L631 615M604 605L607 602M732 539L732 532L731 523L732 516M732 539L725 544M732 516L726 517L721 518L714 518M706 540L705 530M714 518L710 523L705 530M678 529L684 526L689 522M678 529L680 534L681 542L681 547M705 530L696 525L689 522M670 524L670 518L669 509M670 524L678 529M679 500L690 502M689 522L689 516L690 509L690 502M670 580L672 588L675 595M670 580L677 574L685 570M675 595L682 595L687 594L693 593M685 570L688 576L693 581L695 586M693 593L695 586M686 565L685 570M710 578L712 569M710 578L702 582L695 586M671 602L663 603L656 603M671 602L673 608L677 613L680 619M667 627L662 624L656 621L650 618M667 627L673 623L679 620M650 618L652 610L656 603M679 620L680 619M699 602L698 608M699 602L693 593M698 608L692 612L686 616L680 619M675 595L671 602M644 650L651 649L658 649L665 647M644 650L643 648M665 647L665 641L666 634L667 627M647 619L650 618M695 641L690 635L687 631L684 625L679 620M665 647L672 651L679 655M698 608L701 613L704 619L708 623M699 641L703 634L704 630L708 623M591 484L584 490L578 496M607 490L609 499L610 508M610 508L604 508L597 509L589 510L583 511M578 496L581 505L583 511M401 592L395 589M401 592L407 590L413 587L419 585L425 583M406 547L412 549L417 552L424 553M425 583L425 575L425 567L424 561L424 553M401 592L402 597L403 604L405 611L406 617M447 607L441 611L436 614L431 618L426 623M447 607L450 600M450 600L449 597M406 617L412 618L420 620L426 623M425 583L432 586L437 590L444 593L449 597M385 474L388 481L390 485L392 493L394 498L395 504M405 509L412 508L419 506M419 457L423 464L425 469L429 474L432 481M419 506L423 500L425 493L429 488L432 481M590 789L595 780M590 789L594 793L597 799L599 804L602 808L605 814L609 820M595 780L600 780L606 779L613 780L619 779L626 780L633 779L638 778M623 819L629 815L633 809L637 804L642 798L646 794M646 794L643 785L638 778M565 832L566 826L567 819L568 814L569 807L572 801L573 795M573 795L579 792L585 791L590 789M706 446L701 452L696 459M682 435L681 443L679 451M696 459L690 456L686 455L679 451M648 465L652 459L656 451M669 481L674 476M656 451L664 454L672 456M674 476L674 469L673 463L672 456M808 616L807 615M771 623L774 617M774 617L781 617L786 616L793 617L800 616L807 615M836 594L829 596L824 597L817 599L811 601M811 601L810 608L807 615M699 602L707 601L713 600L720 598M710 578L715 584L721 590M721 590L720 598M778 533L770 533L765 536L757 536M778 533L778 526L776 517L775 510M757 536L755 528L750 521L747 515M775 510L767 507L761 505M761 505L754 510L747 515M793 498L787 501L781 505L775 510M794 539L786 540M786 540L778 533M732 539L737 540L745 543L751 545M735 514L732 516M735 514L747 515M751 545L757 536M757 488L759 496L761 505M735 514L734 508L732 502L730 495L728 489M728 489L733 486M723 487L717 480L713 474M723 487L717 490L712 494L709 498L703 502M703 502L694 500M694 500L694 494L694 488L695 481L695 475M713 474L705 472L699 471M699 471L695 475M727 453L722 459L719 463L717 468L713 474M728 489L723 487M714 518L710 514L708 508L703 502M690 502L694 500M674 476L681 477L688 475L695 475M696 459L697 464L699 471M672 456L679 451M675 428L665 428M656 451L655 449M655 449L657 442L662 434L665 428M685 405L678 401L673 399L667 394M657 403L657 412L656 418M665 428L660 424L656 418M616 423L613 433M616 423L626 418M626 418L632 423L639 428M613 433L617 438L621 444L624 450M624 450L630 446L635 442L640 440M640 440L639 428M594 441L599 439L607 436L613 433M596 411L601 414L606 417L611 419L616 423M628 409L626 418M656 418L651 421L644 424L639 428M622 460L624 450M655 449L647 445L640 440M613 523L619 525L625 528L630 529M613 523L611 515L610 508M610 508L617 507L625 505L632 503M632 503L636 511L642 517M630 529L637 524L642 520M642 517L642 520M635 491L633 497L632 503M610 508L610 508M656 505L652 508L647 514L642 517M670 524L662 527L656 531M656 531L648 525L642 520M785 338L789 331L791 322M824 335L821 329L818 324L814 321L811 315M791 322L797 319L804 318L811 315M812 308L811 315M758 301L765 304L773 306M758 301L754 304L749 310L745 315M745 315L746 322L748 328M773 308L773 306M773 308L771 314L766 321L764 326L759 332M759 332L748 328M762 337L759 332M791 322L785 317L778 313L773 308M752 4L757 -5M752 4L754 11L756 19L757 25M757 25L765 26L772 25M772 25L776 19L777 14L780 7M780 7L778 0L774 -4M752 4L747 5L740 8L733 10L726 12M723 9L726 12M825 29L819 27L812 25L806 25L800 23M807 -2L802 6L797 12M800 23L797 12M810 52L805 48L797 47L791 43L786 40M786 40L786 40M786 40L791 33L795 29L800 23M780 7L784 9L792 10L797 12M772 25L777 29L782 35L786 40M583 295L589 298L596 301M583 295L575 298M575 298L575 304L576 311L576 320M596 301L597 308L598 316M598 316L592 318L587 320L581 322M581 322L576 320M608 292L605 284L603 277M608 292L602 295L596 301M603 277L595 277L587 276M587 276L586 281L583 289L583 295M569 296L575 298M562 323L570 322L576 320M603 337L605 329L605 321M605 321L598 316M583 338L582 331L581 322M516 282L514 282M491 310L490 302L490 296M514 282L508 284L503 289L496 292L490 296M577 264L583 257M577 264L571 265M571 265L567 261L564 256L560 250L556 246M583 257L582 251L580 243L580 236M580 236L573 236L566 236L560 237M556 246L560 237M587 276L582 271L577 264M563 273L571 265M554 219L557 226L559 232L560 237M554 219L559 209M559 209L567 210L573 211L582 211M587 227L588 218M587 227L580 236M582 211L588 218M547 248L544 253L541 258L537 264M547 248L543 243L537 239L533 235M537 264L533 261L526 256L521 253L516 249M533 235L528 240L521 244L516 249M537 268L537 264M556 246L547 248M554 219L548 220L541 222L533 225M533 225L533 235M514 282L512 275L511 268L508 263L506 255L504 249M504 249L516 249M762 153L761 162L760 171M762 153L769 155L778 155L785 156M760 171L765 178L772 182M785 156L790 162M772 182L776 182M776 182L780 178L786 173L791 166M790 162L791 166M791 127L789 134L789 141L786 150L785 156M766 123L763 129L760 138L755 144M755 144L762 153M810 151L803 154L796 159L790 162M811 192L803 196L798 199L790 201M809 182L803 179L799 173L796 169L791 166M790 201L786 196L781 189L776 182M755 144L747 145M755 110L750 112L743 114L735 116M735 116L734 122L732 130M732 130L738 135L741 140L747 145M757 200L761 194L766 188L772 182M757 200L751 198L746 195M760 171L753 175L745 177M746 195L747 187L745 177M726 12L726 21L727 29M757 25L751 33M751 33L746 31L738 32L732 31L727 29M696 9L695 18L693 26M712 37L706 33L698 31L693 26M712 37L723 34M727 29L723 34M712 37L709 43L704 50L701 58M693 26L686 31L678 36M678 36L681 42L685 46L689 52L693 58M693 58L701 58M735 116L730 112L725 108M732 130L725 131L718 134L711 135M711 135L710 127L709 120L708 112M725 108L717 110L708 112M47 93L48 99L47 106L46 112L47 117L48 123L46 130L48 135L48 142L48 148M47 93L51 90M51 90L56 94L62 98L67 102L71 106L77 108L82 112L86 116L91 119L97 123M66 150L71 147L75 142L81 138L86 134L90 132L96 127M66 150L58 150L51 151M96 127L97 123M51 151L48 148M8 139L14 140L21 143L29 143L35 144L42 145L48 148M10 96L16 95L23 96L28 94L35 93L41 93L47 93M96 193L93 187L89 183L84 176L81 171L77 166L74 160L70 155L66 150M114 160L111 155L107 149L106 144L103 137L99 133L96 127M40 181L43 175L44 168L46 162L47 157L51 151M141 81L142 87L141 95L142 101L141 106L140 112L140 119M141 81L135 81L128 78L120 78L113 76L106 75M106 75L105 82L104 88L105 95L103 101L102 108L102 114L101 120M140 119L134 119L127 120L121 120L114 119L106 121L101 120M148 125L140 119M97 123L101 120M172 -7L165 -3L160 -2L155 2L148 5M123 -7L128 -4L136 -1L142 3L148 5M102 68L95 69L89 69L81 68L74 68L68 67L61 68M102 68L104 61L106 55L109 49L111 42M111 42L108 37L105 31L102 25M102 25L96 24L89 25L84 26L77 26L71 25M71 25L65 31L61 35L58 40L52 46M52 46L56 55L57 61L61 68M51 90L54 86L56 80L58 74L61 68M106 75L102 68M142 81L143 75L145 68L146 60L148 54L150 47L151 42M142 81L141 81M151 42L150 40M150 40L143 40L137 41L131 41L124 41L118 42L111 42M112 -1L109 5L108 11L105 18L102 25M148 5L148 11L150 20L150 27L151 34L150 40M63 -10L65 -4L66 1L68 8L69 14L70 20L71 25M23 33L28 36L34 39L41 42L47 43L52 46M416 29L416 29M416 29L417 36L419 43L419 50L421 56M416 29L425 29L432 28M421 56L428 57L435 56L442 58M442 58L443 49L446 42M432 28L437 32L442 37L446 42M420 -5L418 2L419 7L418 15L418 23L416 29M432 28L437 24L440 19L445 14M445 14L444 7L442 -1M520 82L513 80L507 79M520 82L524 77L529 73L533 69L536 64L540 59M539 54L540 59M539 54L533 54L524 52L517 52L510 51M510 51L510 58L508 66L508 73L507 79M475 21L469 26M475 21L485 21M485 21L491 24L496 30L503 33M469 26L466 33M466 33L467 39L470 46L471 52L474 59M503 33L503 43M503 43L498 46L493 49L488 54L483 57L478 60M474 59L478 60M445 14L451 16L456 20L463 23L469 26M446 42L453 38L459 37L466 33M289 262L294 256L298 253L304 247L309 243M278 229L288 227L295 226M309 243L305 237L300 231L295 226M142 81L148 82L156 82L162 83L170 85L177 86L184 86M151 42L159 42L167 44M167 44L171 51L175 57L181 62L184 67L189 73M189 73L187 79L184 86M155 126L159 122L167 119L171 112L176 109L182 105L187 101M184 86L185 94L187 101M177 152L184 150L191 147L197 147M197 147L198 139L198 134L199 128L198 122L198 116L199 109M187 101L193 105L199 109M412 -8L405 -6L398 -2L392 2M392 2L387 -3L382 -8L379 -12M405 362L405 370L408 375L410 382L410 387L411 394M405 362L411 359L418 355L424 351L429 348M429 348L437 350M437 350L440 357L441 361L444 368L445 372L449 380L450 384M450 384L444 385L438 387L430 389L424 391L417 391L411 394M452 385L450 384M458 338L452 341L448 344L443 348L437 350M464 409L463 415L460 422L458 427L456 434M456 434L450 435L443 436L437 437L430 438M404 405L407 399L411 394M394 112L402 111L408 109L415 107M394 112L395 118L393 125L393 132M415 107L419 112M415 131L415 124L419 119L419 112M415 131L409 133L401 134L396 135M393 132L396 135M417 181L425 183L430 186L438 187M417 181L413 189L408 195L405 201M405 201L408 205M408 205L416 208L423 208L430 211M441 190L438 187M441 190L441 198L440 206M440 206L430 211M401 200L394 202L387 206L381 209M401 200L405 201M401 234L404 226L404 220L406 213L408 205M401 234L395 232L390 229L383 228L378 225M381 209L379 215L377 223M377 223L378 225M426 230L427 223L428 216L430 211M405 240L401 234M434 767L428 771L425 774L419 778L415 780L409 785L404 787L398 791M434 767L430 763L424 757L418 753L414 750L408 746L404 741M379 764L379 763M379 763L384 758L389 754L393 749L399 744L404 741M276 627L282 623L289 621L294 616L300 614M300 614L303 621L308 625L312 632L314 638L319 643M276 651L282 651L289 653L296 654L303 654L309 655M319 643L314 649L309 655M358 732L363 726L367 723L373 716L377 712M358 732L363 736L366 742L369 747L371 753L375 759L379 763M404 735L400 729L396 724L391 719L386 712M404 735L404 741M386 712L377 712M300 765L308 767L315 771L322 773M300 765L300 759L298 753L299 746L297 738L297 732M297 732L304 732L311 729L317 729L323 728L331 727M332 768L322 773M332 768L333 763L334 757L334 751L334 744L336 738L336 732M336 732L331 727M279 778L283 775L289 772L294 769L300 765M315 802L318 796L317 791L320 784L321 778L322 773M351 777L343 774L339 772L332 768M358 732L350 731L343 731L336 732M331 692L336 689L343 687L349 684L355 681M331 692L331 700L331 706L330 712L331 721L331 727M377 712L374 707L369 701L366 696L363 691L358 686L355 681M462 641L456 651M462 641L468 640L474 638L480 635L487 633M487 633L489 638L494 644L498 649L501 655M456 651L459 659M459 659L464 662L470 665L474 667L481 672L486 674M501 655L498 661L496 669M496 669L486 674M447 607L450 614L452 619L455 625L456 628L460 635L462 641M426 623L425 629L425 634L427 641L427 647M427 647L433 648L439 648L444 650L450 651L456 651M490 621L489 628L487 633M450 600L456 600L463 601L470 600L477 602M518 647L512 650L506 653L501 655M404 735L410 733L414 729L420 725L425 723L430 719M386 712L391 707L394 702L399 697L404 692L408 688L413 682M413 682L419 685M430 719L427 713L426 705L423 698L420 691L419 685M413 682L410 675L406 666M406 666L411 661L417 657L422 652L427 647M459 659L454 664L452 671L448 677L444 682M419 685L426 685L431 685L438 683L444 682M483 820L478 818L470 817L465 814L457 812L451 811L445 809M483 820L485 814L486 808L487 801L489 795M483 781L485 788L489 795M483 781L476 782L468 783L461 783L456 783L448 784M448 784L447 791L446 797L446 802L445 809M439 814L445 809M530 819L530 812L530 807L530 800L531 794M531 794L523 794L516 794L511 795L503 794L497 795L489 795M434 767L435 767M435 767L440 772L444 779L448 784M39 328L43 334L46 338L49 345L53 350L55 355M39 328L34 332L29 335L23 340L18 345L11 349L6 352M6 352L8 360L12 367L15 374M50 376L51 369L54 361L55 355M50 376L43 376L38 378L31 378L26 379M15 374L26 379M-10 343L-4 347L1 349L6 352M26 300L29 304L34 309L38 314L41 320M41 320L39 328M-14 396L-9 392L-4 390L1 385L6 380L10 377L15 374M23 421L23 414L24 409L25 403L26 398L25 392L25 386L26 379M60 385L55 380L50 376M63 277L69 284L74 289M41 320L47 318L55 315L62 315L68 313M68 313L70 307L71 301L72 294L74 289M103 273L100 279L96 286M96 286L88 286L82 288L74 289M194 408L191 402L189 396L187 391L183 385L180 378M145 401L148 395L152 391L155 384L157 380M157 380L166 380L173 378L180 378M260 288L257 294L255 300L253 306L249 312L246 318M268 343L268 343M246 318L251 324L255 328L259 333L263 339L268 343M251 252L245 252L239 252L233 252L226 253L221 253M259 284L253 285L245 284L239 283L233 283L226 284L220 283M220 283L219 278L220 271L220 264L220 260L221 253M189 200L190 207L192 214L195 221L195 227L198 233L200 241M175 256L175 256M175 256L182 252L189 248L193 245L200 241M227 224L222 228L219 232L216 238L211 243M221 253L217 249L211 243M225 203L217 200L211 200L203 197L197 195M197 195L190 198M211 243L200 241M169 307L176 305L181 302L188 299L192 297L199 293M169 307L168 314L168 319L165 326L165 334M165 334L172 339L179 341M179 341L186 338L191 336L197 333L203 331L207 329L214 326M217 319L214 326M217 319L215 311L210 303L208 296M208 296L199 293M151 288L156 293L160 298L165 302L169 307M175 256L179 261L182 266L185 272L190 276L191 283L196 289L199 293M246 318L238 319L231 319L223 320L217 319M220 283L214 289L208 296M272 535L277 531L283 528L288 526L296 524L301 520M272 535L268 528L264 522L260 518L256 511L253 505M301 520L300 513L298 508L299 500L297 494M297 494L292 491L286 488L278 487L273 483L267 481M267 481L263 487L261 494L256 498L253 505M265 475L267 481M311 484L303 490L297 494M227 512L234 510L240 509L247 507L253 505M306 524L308 531L310 538L311 544L312 551M306 524L312 523L319 523L325 522L329 519L335 520L342 520L348 518M312 551L318 553L326 554L334 557M334 557L338 552L341 546L343 540L348 535L351 530L354 524M354 524L348 518M344 495L345 504L346 510L348 518M301 520L306 524M359 525L354 524M354 576L347 575L341 573M341 573L338 565L334 557M296 585L296 576L296 568M296 585L288 586L281 588L274 588L267 589M296 568L291 563L285 558L278 554L275 550L268 545M267 589L263 584L258 578L254 573L250 567M268 545L263 549L258 551L252 555M252 555L252 561L250 567M320 595L324 589L327 586L333 581L336 577L341 573M320 595L312 595L306 596M306 596L301 591L296 585M312 551L306 557L301 561L296 568M255 612L259 607L261 601L264 594L267 589M300 614L301 608L304 601L306 596M272 535L268 545M224 586L229 583L235 580L240 576L244 571L250 567M228 540L234 544L241 547L245 551L252 555M718 621L725 627L729 630L734 636M718 621L723 614L726 606M734 636L737 630L742 623L746 617M726 606L734 606L740 607M746 617L740 607M708 623L718 621M735 648L733 642L734 636M720 598L726 606M770 623L764 621L759 619L751 617L746 617M602 642L601 648L599 655L597 662M597 662L604 665L610 670L617 672L623 676M644 650L642 655L641 662L638 669M623 676L630 672L638 669M682 681L675 683L670 685L664 686M638 669L643 673L648 676L654 679L659 682L664 686M731 794L725 799L721 804L714 809L709 814L705 818M578 468L570 471L562 476M578 496L569 494M569 494L568 487L565 481L562 476M566 450L561 454L556 459M556 459L556 467L559 474M562 476L559 474M543 434L539 439M556 459L547 457L539 454M539 439L538 447L539 454M508 419L508 427L507 433M539 439L533 438L527 437L520 436L514 434L507 433M456 434L460 440L465 444L471 450M471 450L479 449L484 446L492 446L499 445M507 433L503 439L499 445M449 597L451 591L453 586L456 580L458 575L460 569L461 562L464 557M424 553L429 550L437 547M437 547L443 550L449 551L457 554L464 557M419 506L424 509L429 512L435 516L440 519M437 547L438 539L438 533L439 526L440 519M495 581L494 574L492 566L491 560M491 560L485 559L479 555L472 554M472 554L464 557M469 477L475 479L480 483L486 486L491 489L497 491L502 494M469 477L462 483M462 483L461 490L461 499L461 505L459 512M497 513L498 507L500 501L502 494M497 513L491 516L483 517L478 520L471 521M471 521L466 516L459 512M471 450L470 455L471 463L469 471L469 477M432 481L437 481L444 481L451 482L456 482L462 483M440 519L446 518L453 514L459 512M472 554L472 548L471 540L472 535L472 528L471 521M550 755L546 750L540 745L538 741L533 736M550 755L547 761L546 767L544 771L541 777L539 783M539 783L537 784M537 784L533 779L527 776L524 771L518 768L514 765L509 761M509 761L510 754L513 747L515 739M515 739L521 739L527 737L533 736M589 754L590 761L593 767L593 775L595 780M589 754L583 751L578 749L572 746M572 746L567 749L561 751L555 753L550 755M573 795L566 793L560 789L553 788L546 784L539 783M531 794L534 789L537 784M487 768L485 775L483 781M487 768L493 765L502 762L509 761M637 748L638 741L639 736L639 729L640 723L642 717M637 748L640 754L643 760M643 760L649 757L654 758L660 757L667 754L673 753L678 753L685 752M649 715L642 717M649 715L654 716L661 719L667 722L671 724L678 728L684 730M684 730L687 735L689 741M689 741L685 752M606 712L604 718L604 726L603 731L601 739L601 744M606 712L615 709L622 705M601 744L607 745L614 746L619 746L625 746L631 746L637 748M622 705L629 708L635 714L642 717M589 754L594 748L601 744M638 778L640 773L643 765L643 760M623 676L622 683L623 691L623 698L622 705M664 686L661 692L658 698L655 702L651 709L649 715M695 689L693 695L691 700L691 706L689 712L686 717L685 724L684 730M729 735L723 736L715 737L710 738L703 739L695 739L689 741M727 781L722 779L715 778L709 779L703 775L697 776L691 774M691 774L689 766L687 759L685 752M684 790L678 793L671 795L664 796L657 799M684 790L688 796L692 801L695 807L699 812L702 818M657 799L660 805L660 810L661 817L663 823L665 829M691 774L687 782L684 790M646 794L651 795L657 799M774 617L772 611L772 604L772 597M811 601L806 595L803 591L799 585M772 597L780 593L786 592L792 588L799 585M817 560L812 565L809 570L804 574L799 579M786 540L783 547L781 554L777 562M777 562L783 567L789 571L793 574L799 579M799 579L799 585M678 552L670 553M656 531L655 542M670 553L664 550L661 546L655 542M758 357L752 358L744 359L738 359M748 328L742 332L735 336M735 336L737 343L737 352L738 359M731 371L731 366M731 366L738 359M812 308L807 301L803 294M773 306L778 299L783 292M783 292L789 291L796 294L803 294M753 291L758 301M753 291L756 281L759 274M759 274L765 275L773 278L779 279M783 292L781 285L779 279M828 273L821 272L815 272L810 271M803 294L805 286L807 278L810 271M587 227L592 232L597 237L603 243M583 257L591 255L598 253M603 243L598 253M603 277L610 267M598 253L602 258L605 263L610 267M608 292L615 294M615 294L621 289L626 286L631 281M631 281L628 277L622 271L618 266M610 267L618 266M633 142L631 148L632 155L631 161M633 142L625 139L620 135L612 131M612 131L611 137L609 144L610 152L608 158M608 158L613 160L620 160L627 163M627 163L631 161M652 130L655 132M652 130L645 133L640 139L633 142M648 167L640 164L631 161M648 167L654 162L660 156M660 156L659 148L658 139L655 132M685 111L684 117L683 123L681 130M685 111L691 110L698 110L704 109M711 136L711 135M711 136L704 136L697 136L691 135L684 134M704 109L708 112M684 134L681 130M442 58L447 65M474 59L469 62L462 64L455 67M455 67L447 65M561 30L560 21M561 30L558 37M560 21L553 17L547 12L540 8M558 37L551 42L543 45M543 45L538 39L535 34L531 28L527 23L524 19M540 8L533 11L525 15M524 19L525 15M591 9L591 15L589 22L588 29M591 9L584 8L578 7L570 7M588 29L581 30L575 30L568 31L561 30M570 7L566 15L560 21M570 7L568 3L564 -3L562 -9M546 -4L543 2L540 8M539 54L543 45M510 51L503 43M503 33L508 29L513 25L519 23L524 19M513 -4L517 2L522 8L525 15M496 -1L492 4L491 11L488 16L485 21M552 194L546 195L539 195L532 195M552 194L555 202L559 209M533 225L525 217M525 217L528 210L530 203L532 195M450 249L454 247M444 258L445 265L445 273L448 280L448 287M448 287L454 287L462 287L468 285L475 285L481 286M481 286L481 279L483 274L481 268L482 262M454 247L460 249L466 252L471 256L477 260L482 262M481 286L485 290L490 296M504 249L502 248M482 262L487 259L492 254L497 252L502 248M685 111L681 106M704 109L705 101L705 94L706 86M706 86L700 86L695 84L687 82L682 83M681 106L681 99L681 90L682 83M625 113L627 106L630 99L632 92M625 113L632 115L638 118L644 121L650 123M632 92L640 94L644 94L652 94M650 123L653 115L657 107M657 107L654 100L652 94M652 130L650 123M655 132L661 132L669 131L674 130L681 130M681 106L675 106L669 106L662 106L657 107M657 86L652 94M657 86L664 84L672 82L679 80M679 80L682 83M520 82L524 88L528 94M540 59L547 65L553 71M528 94L535 95L543 94M553 71L551 78L547 82L545 89L543 94M552 194L556 185M539 160L534 165L530 167L526 173L520 177M539 160L547 161M520 177L520 185M532 195L525 191L520 185M547 161L549 167L552 173L554 178L556 185M582 211L582 205L585 198L586 192L587 186M587 186L578 179M556 185L563 183L571 181L578 179M660 156L668 157L675 159L681 161M684 134L683 140L684 147L683 153L683 160M683 160L681 161M734 156L727 155L719 153L712 152M734 156L736 164L736 171M736 171L731 175L723 179L718 183M712 152L708 157M708 157L710 164L710 169L712 176L713 182M718 183L713 182M747 145L740 151L734 156M711 136L713 144L712 152M745 177L736 171M746 195L739 197L731 200M731 200L728 194L722 188L718 183M683 160L690 159L696 159L703 158L708 157M746 61L752 56L755 49M746 61L751 66L757 70L762 75L767 79M755 49L764 51L770 51L778 51M767 79L771 73L776 65L780 60M780 60L778 51M786 40L783 45L778 51M751 33L754 41L755 49M797 71L792 68L785 65L780 60M768 85L767 79M709 65L709 72L708 79L707 85M709 65L714 64L721 64L728 63L734 62M707 85L714 87L723 88L730 88M737 64L734 62M737 64L735 72L734 79L734 85M734 85L730 88M680 71L685 67L688 62L693 58M680 71L679 80M701 58L709 65M706 86L707 85M723 34L725 40L727 45L730 52L731 56L734 62M725 108L727 102L729 96L730 88M746 61L737 64M756 97L750 94L744 92L738 88L734 85M251 204L257 197L261 193L266 186M271 221L273 214L276 210L278 203M266 186L270 192L274 198L278 203M302 210L299 217L295 226M302 210L297 203M278 203L285 202L291 202L297 203M475 21L472 15L472 9L469 2L467 -3M172 -7L178 -5L183 -4L188 -2L194 1M167 44L172 39L179 36L184 32L188 27L194 23M194 23L194 15L194 8L194 1M194 1L204 -5M248 22L254 16L258 11M248 22L241 22L234 21M234 21L230 14L229 10L225 5L223 -2M258 11L257 4L256 -2M421 56L417 61L413 65M417 87L424 86L433 86M417 87L411 81M447 65L443 70L439 76L437 81L433 86M413 65L411 72L411 81M365 380L369 374L372 368L377 364L381 357L384 351M365 380L358 377L355 374L348 371L343 367L338 363M384 351L377 348L373 345L367 340L360 338L356 334L349 330M338 363L340 358L341 351L344 343L346 337L349 330M365 383L365 380M385 351L384 351M385 351L391 354L399 359L405 362M317 373L316 376M317 373L324 371L331 368L338 363M317 373L313 366L309 360L306 352L303 347M323 315L331 317L339 319L346 321M346 321L349 330M385 351L388 346L391 338L393 332L396 327L398 321M429 348L427 341L425 335L422 329L420 323M398 321L405 323L413 323L420 323M460 323L456 318L452 314L446 310L442 306L439 302M420 323L425 318L429 314L434 308L439 302M448 287L444 294L438 300M439 302L438 300M407 164L402 157L395 151M407 164L402 169L397 172L393 177L388 180M395 151L389 154L384 155L378 157M378 157L377 165L375 174M388 180L379 179M379 179L375 174M411 164L413 170L416 176L417 181M411 164L407 164M401 200L397 194L395 190L392 184L388 180M369 130L360 137M369 130L374 130L381 132L387 131L393 132M396 135L395 143L395 151M360 137L361 142M361 142L367 148L372 151L378 157M349 172L350 165L353 159L355 154L359 149L361 142M349 172L356 173L363 174L368 173L375 174M371 196L375 191L376 184L379 179M371 196L377 201L381 209M266 186L266 183M297 203L299 196L300 191L300 185M266 183L271 180L275 176L280 172M280 172L291 172M300 185L295 179L291 172M301 689L299 696L297 701L294 708L292 714L288 719L287 726M301 689L295 688L287 685L282 682L274 680L268 677L262 675M256 683L262 675M256 683L258 690L260 695L261 701L262 708L263 715L264 720L265 726M265 726L273 726L280 725L287 726M313 684L320 685L324 688L331 692M313 684L307 687L301 689M297 732L287 726M263 663L262 669L262 675M309 655L310 663L311 669L312 676L313 684M218 688L225 688L230 687L237 685L244 684L249 683L256 683M258 733L265 726M394 660L388 661L382 664L375 666L368 667L361 669M394 660L392 654L391 645L392 639L390 631M361 669L357 664L354 656L350 650L348 644L343 638M390 631L384 627L379 624L373 622L368 618L363 615M343 638L346 629L351 622M351 622L357 618L363 615M355 681L359 674L361 669M406 666L401 664L394 660M406 617L400 621L395 627L390 631M319 643L326 641L332 640L337 640L343 638M367 603L364 608L363 615M320 595L324 598L331 603L336 608L341 612L345 617L351 622M451 745L458 745L464 748L471 750L477 751M451 745L451 738L450 733L448 726M448 726L454 720L458 715L464 711L468 705M477 751L480 744L485 739L487 735L492 727L494 722M494 722L494 719M494 719L489 716L484 711L479 707L473 705M473 705L468 705M435 767L438 761L444 756L448 749L451 745M487 768L484 763L481 756L477 751M430 719L435 721L441 724L448 726M444 682L449 688L453 692L460 697L463 702L468 705M515 739L510 736L504 731L501 727L494 722M496 669L501 673L505 677L510 682L515 685L520 690L525 693M486 674L483 679L480 685L478 692L476 699L473 705M525 693L519 698L516 703L510 706L505 711L498 714L494 719M538 689L543 687L549 684L554 680L561 679L567 676L571 672L578 670M538 689L535 694M535 694L540 701L542 706M542 706L549 709L556 710L563 714L568 716M568 716L574 712L581 709L587 704M587 704L585 697L584 691L583 684L582 678L581 671M581 671L578 670M555 640L560 646L562 649L565 654L570 660L575 664L578 670M535 651L536 658L537 664L536 670L538 676L538 684L538 689M525 693L535 694M533 736L535 729L537 723L538 717L540 712L542 706M572 746L571 740L571 734L569 729L568 723L568 716M606 712L599 709L594 706L587 704M597 662L593 665L586 667L581 671M55 355L62 352L68 351L75 348L80 345L86 342M68 313L74 319L78 323L84 326M86 342L86 334L84 326M85 382L89 376L94 368L98 362L101 356M86 342L92 347L97 351L101 356M96 286L99 291L102 296L107 304L109 309M84 326L91 322L97 317L103 312L109 309M140 288L135 295L132 300L127 307L123 312M123 312L116 311L109 309M148 360L153 354L157 348L160 340L164 334M148 360L143 360L135 359L131 359L125 360L118 361M164 334L159 332L152 330L145 329L140 326L133 325L128 322M128 322L124 329L122 333L120 340L118 344L115 351L113 357M118 361L113 357M157 380L155 372L151 366L148 360M180 378L184 372L188 364M188 364L186 359L184 353L182 347L179 341M165 334L164 334M124 394L124 387L121 380L120 375L119 366L118 361M123 312L128 322M101 356L113 357M265 350L259 352L253 354L247 355L240 357L234 360L227 362M265 350L266 356L269 363L271 369L272 374L274 381M274 381L269 384L264 390L260 393L254 397M254 397L248 393L243 390L236 386L231 383L225 379M225 379L224 368M224 368L227 362M268 343L265 350M214 326L217 333L219 338L221 344L222 350L225 356L227 362M292 388L285 386L281 384L274 381M253 422L252 415L253 409L254 403L254 397M206 409L209 403L214 397L218 391L221 385L225 379M188 364L194 364L199 365L207 366L212 366L218 368L224 368M560 552L556 556L551 561L548 565L544 569M560 552L569 559M569 559L568 565L567 572L567 578M544 569L551 575L556 581M556 581L567 578M549 601L551 594L553 587L556 581M529 583L531 576L533 570M533 570L544 569M579 591L579 587M579 587L573 583L567 578M607 602L606 597L607 590L606 585L606 578L604 572M579 587L585 583L587 578L594 574L598 570M604 572L598 570M569 559L575 557L581 556L588 556M598 570L593 563L588 556M491 560L499 555M497 513L501 519L504 523L508 529M508 529L505 535L503 543L501 548L499 555M533 570L526 560M499 555L507 556L513 557L519 559L526 560M538 480L538 473L535 465L535 458M538 480L531 480L524 482L518 480L510 481M535 458L528 458L522 458L516 460L510 460M510 481L510 475L511 468L510 460M541 482L547 479L553 476L559 474M541 482L538 480M539 454L535 458M499 445L503 451L506 456L510 460M502 493L502 494M502 493L506 488L510 481M752 589L744 585L737 579M752 589L761 587M761 587L763 580L764 573L767 566M734 566L735 573L737 579M734 566L740 561L745 560L753 556M753 556L760 560L767 566M721 590L725 586L733 582L737 579M740 607L745 602L747 595L752 589M772 597L766 591L761 587M777 562L767 566M730 564L734 566M751 545L753 556M670 580L665 578L658 575M656 603L651 596L648 590M658 575L652 583L648 590M670 553L666 559L660 564L656 570M658 575L656 570M624 602L628 596L632 590M632 590L640 589L648 590M640 353L646 345L650 339M623 346L626 339L627 331L629 324M650 339L648 330M648 330L641 327L634 325L629 324M605 321L610 319L618 316L624 316M629 324L624 316M615 294L619 300L622 307L624 314M624 316L624 314M659 367L665 360L672 355M667 390L673 385L678 380L684 376L689 372M672 355L675 358L680 364L684 367L689 372M650 339L657 341L662 343L667 345L673 346M672 355L673 346M702 385L700 379L696 372M696 372L689 372M731 366L725 363L720 360L714 359L707 355M696 372L700 366L704 362L707 355M735 336L727 332L718 331M718 331L715 337L713 342L710 348L707 353M707 355L707 353M415 131L421 135L425 140M419 112L424 112L431 114L437 115L443 114M443 114L442 121L440 129L438 135M425 140L432 138L438 135M411 164L417 161L423 156M425 140L425 147L423 156M438 187L440 180L439 171L441 164M423 156L428 160L435 163L441 164M507 79L498 82M478 60L481 67L485 73L488 79M488 79L498 82M591 9L597 3M594 -6L597 3M689 -0L683 2L676 5L670 9L663 12M678 36L670 35M670 35L666 29L665 20L662 14M663 12L662 14M663 12L661 5L659 -1L657 -7M680 71L675 67L669 64L665 59M670 35L668 37M665 59L665 51L667 46L668 37M657 86L653 80L652 74L649 67M665 59L660 62L655 64L649 67M525 217L516 219L508 219M520 185L512 188L505 190L499 194M499 194L497 203M508 219L505 215L501 208L497 203M502 248L500 240M508 219L506 227L503 234L500 240M450 212L450 218L454 224L455 230L454 236L456 243M450 212L457 211L463 209L469 207M456 243L462 240L468 235L472 230L479 228M479 228L478 219L478 212M469 207L478 212M440 206L450 212M454 247L456 243M470 180L464 181L458 183L452 186L447 189L441 190M470 180L470 187L470 193L469 199L469 207M500 240L496 238L489 235L485 230L479 228M497 203L490 205L484 208L478 212M558 72L563 77L568 83L572 89L578 93M558 72L562 67L567 63L572 61L577 56M578 93L579 88L584 81L586 75L588 68L590 63M590 63L583 57M583 57L577 56M558 37L564 42L567 48L573 50L577 56M553 71L558 72M590 32L588 29M590 32L588 39L587 44L584 50L583 57M543 94L548 101L555 107M578 93L578 93M555 107L560 103L565 101L572 96L578 93M709 239L710 239M709 239L711 232L712 228L714 222L716 215M710 239L716 240L723 240L729 240L735 241M726 213L716 215M726 213L731 218L734 223L739 227L744 232M744 232L740 237L735 241M757 200L760 207M790 201L786 209M760 207L765 207L774 208L779 208L786 209M726 213L728 206L731 200M744 232L745 232M745 232L754 225M760 207L757 214L756 220L754 225M716 215L709 212L703 209M713 182L705 186L699 190M703 209L703 203L701 196L699 190M681 161L682 169L681 178L682 185M699 190L690 187L682 185M323 220L320 226L318 232L317 238L315 243M323 220L329 222L335 221L341 222L347 223M347 223L346 233M346 233L340 236L336 242L332 246L327 250M315 243L322 247L327 250M309 243L315 243M317 211L323 220M317 211L309 211L302 210M351 219L347 223M351 219L358 219L365 220L371 222L377 223M378 225L376 232L373 239L371 245L369 251L367 258M367 258L362 252L359 248L355 242L349 238L346 233M313 288L318 282L322 277L327 272L333 268M333 268L331 262L328 256L327 250M271 152L274 159L277 165L280 172M271 152L274 145L279 140M279 140L287 142L293 142M291 172L295 166L299 160M293 142L296 147L298 153L299 160M210 62L217 67L223 71M210 62L212 54L214 45M223 71L231 69L237 65L243 62L251 60M214 45L219 42L225 39M225 39L231 41L236 43L243 48L249 49M249 49L252 58M252 58L251 60M226 108L220 109L211 109L207 110L199 109M226 108L232 100M189 73L193 70L199 67L204 64L210 62M232 100L233 97M233 97L230 90L229 85L226 78L223 71M194 23L197 27L201 31L205 37L209 40L214 45M233 97L239 92L245 89L252 83L257 79M257 79L254 74L254 66L251 60M234 21L231 26L227 33L225 39M256 35L252 29L248 22M256 35L253 42L249 49M394 112L388 105L381 100M415 107L417 99L416 93L417 87M411 81L403 82L394 84M394 84L389 88L385 95L381 100M375 102L377 101M375 102L375 110L373 117L370 122L369 130M381 100L377 101M258 11L264 12L270 16L275 17L282 20M283 -8L283 -2L284 4L284 10L284 16M284 16L282 20M256 35L262 34L268 34L274 34L280 32M252 58L259 56L265 57L272 57L279 55M279 55L280 48L280 40L280 32M282 20L281 32M280 32L281 32M363 304L369 305L375 304L381 305L388 304M363 304L361 297L359 291L358 285L357 276L356 270M388 304L391 298L397 293L399 286L403 281M367 260L361 265L356 270M367 260L373 260L381 263L389 264L395 264L401 266M401 266L402 273L403 281M346 321L351 315L356 310L363 304M398 321L395 315L392 310L388 304M333 268L338 269L345 268L351 269L356 270M438 300L432 297L427 294L421 291L414 288L408 283L403 281M367 258L367 260M405 261L401 266M348 172L341 170L332 170M348 172L350 180L351 186L353 192L353 198M332 170L328 177L322 184M350 203L344 202L338 201L333 198L326 198M350 203L353 198M326 198L324 192L322 184M349 172L348 172M348 131L343 135L337 138L332 139L327 143M348 131L353 134L360 137M327 143L324 151L324 157M324 157L327 162L332 170M371 196L366 195L359 197L353 198M300 185L308 185L315 185L322 184M299 160L305 160L311 158L319 158L324 157M351 219L350 210L350 203M317 211L321 204L326 198M508 529L513 528L519 527L526 527M526 560L530 553L533 547M526 527L528 533L530 540L533 547M641 552L643 562M641 552L631 546M643 562L639 566L632 571L627 576M631 546L624 549L619 552M619 552L617 558L616 563L613 569M613 569L620 573L627 576M655 542L648 547L641 552M656 570L649 565L643 562M630 529L630 537L631 546M632 590L630 582L627 576M613 523L607 529L602 536M602 536L607 542L614 547L619 552M604 572L613 569M588 556L590 550L592 544L593 538M593 538L602 536M745 315L739 313L734 308L729 306M718 331L715 323M715 323L718 317L724 311L729 306M753 291L748 290L741 293L734 293L728 292M728 292L727 299L729 306M603 243L610 242L616 239M618 266L621 259L625 254L628 248M616 239L623 244L628 248M709 239L704 239L697 238L691 237M703 209L698 213L693 217L687 221M691 237L689 229L687 221M539 160L535 157L531 151L527 147M520 177L515 171L511 165L505 160M527 147L519 148L513 148L505 149M505 160L505 149M499 194L495 188L490 183L485 178M505 160L499 165L496 168L491 172L485 178M470 180L473 175M485 178L473 175M668 37L662 39L654 38L649 41L643 42M649 67L642 64M642 64L642 56L642 48L643 42M662 14L655 15L646 16L639 17M639 17L638 23L638 30L638 38M643 42L638 38M603 160L596 159L589 155L581 154M603 160L603 169L603 177L602 184M602 184L594 185L587 186M578 179L578 172L580 166L580 161L580 155M581 154L580 155M547 161L551 155L556 152M580 155L572 153L565 152L556 152M527 147L528 140L531 134L533 126M533 126L539 126L546 124L552 124M556 152L556 146L555 139L553 130L552 124M528 94L525 99L524 105L521 111L518 116M533 126L525 121L518 116M555 107L554 116L552 124M552 124L552 124M598 100L587 100M598 100L602 105L607 109L611 114L615 118M587 100L585 108L584 114L583 121L581 127M615 118L612 125L611 130M611 130L604 132L599 131L592 132L586 133M586 133L581 127M578 93L587 100M552 124L560 125L566 125L574 125L581 127M612 131L611 130M625 113L615 118M603 160L608 158M581 154L582 148L584 139L586 133M788 222L783 227L777 233M788 222L796 225L803 229L809 232M777 233L777 242L778 249M778 249L784 253L789 257L793 260M809 232L812 239M812 239L807 246L805 254L801 259M793 260L801 259M754 225L761 229L770 231L777 233M786 209L788 216L788 222M821 209L818 214L816 221L812 227L809 232M745 232L749 237L752 245L755 250L760 256M760 256L767 253L772 252L778 249M759 274L756 268M779 279L784 272L788 267L793 260M756 268L758 262L760 256M833 243L826 242L819 239L812 239M810 271L805 266L801 259M253 176L253 168L252 163L251 156M253 176L245 179L236 179M251 156L245 154L237 153L231 151L224 150M236 179L231 174L226 169L221 165L216 160M224 150L215 157M216 160L215 157M271 152L264 150L257 150M266 183L259 180L253 176M257 150L251 156M231 199L233 192L234 186L236 179M257 150L257 144L254 138L254 132M233 129L230 136L226 142L224 150M233 129L240 130L247 130L254 132M197 195L199 188L204 183L206 178L209 172L213 167L216 160M197 147L202 150L209 154L215 157M226 108L229 115L231 121L233 129M413 65L407 62L402 59L396 57L392 53M394 84L390 79L386 74L380 68M392 53L388 57L385 63L380 68M375 22L372 27M375 22L381 16L389 13M372 27L374 35M374 35L379 38L385 43L390 46M389 13L394 18L400 22L406 25L412 29M412 29L408 32L400 38L395 42L390 46M392 2L389 13M359 -3L363 3L366 9L372 15L375 22M416 29L412 29M392 53L390 46M319 43L313 42M319 43L324 41L331 38L336 35M313 42L312 40M312 40L311 32L312 27L311 19L311 12M336 35L339 29L340 23M314 9L320 12L326 16L334 17L340 20M314 9L311 12M340 20L340 23M284 16L290 15L298 15L305 14L311 12M281 32L287 33L292 34L299 37L306 39L312 40M315 -7L314 1L314 9M349 -5L347 1L345 7L341 14L340 20M372 27L365 25L360 25L353 25L348 24L340 23M293 142L297 137L302 130L306 125M327 143L321 139L317 134L313 128L308 125M308 125L306 125M348 131L347 124L344 116L342 108M308 125L310 119L313 111L316 104M342 108L335 107L329 107L322 104L316 104M375 102L368 102L361 103L352 105L346 104M342 108L346 104M298 65L303 69L310 71L317 74L322 77M298 65L302 59L305 53L310 47L313 42M319 43L322 50L324 55L326 60L328 66L331 71M322 77L331 71M502 493L509 497L516 500L523 502L529 505M526 527L532 521M532 521L530 512L529 505M541 482L542 493M529 505L536 500L542 493M569 494L561 497L554 502M542 493L549 497L554 502M583 529L580 519M583 529L575 533L569 536L562 540L557 544M580 519L574 518L567 517L561 518L554 517M557 544L557 543M557 543L555 537L552 530L550 522M554 517L550 522M583 511L580 519M593 538L589 533L583 529M560 552L557 544M554 502L553 510L554 517M533 547L541 546L549 544L557 543M532 521L541 521L550 522M756 268L750 266L742 267L737 266M728 292L725 289M725 289L727 283L732 278L734 271L737 266M735 241L734 248L734 253L732 260M737 266L732 260M710 239L711 247L711 254L712 260M732 260L727 261L718 260L712 260M707 353L701 350L694 347L689 343L682 340M715 323L708 320L702 318M702 318L698 324L693 329L688 333L682 340M673 346L680 340M680 340L682 340M588 218L595 215L601 216L607 213M602 184L607 187M607 213L608 208L606 199L607 193L607 187M616 239L616 231L617 224L617 217M607 213L617 217M627 163L626 171L624 177L621 184M607 187L615 187L621 184M632 248L639 243L644 237M632 248L635 254L641 259L645 264M644 237L653 239L660 241M645 264L653 263L661 261M660 241L667 250M661 261L664 255L667 250M637 281L631 281M637 281L639 276L643 269L645 264M628 248L632 248M518 116L509 118M505 149L498 141M498 141L501 135L504 130L506 123L509 118M498 82L499 90L498 95L499 102L500 110M509 118L500 110M636 -4L638 1L636 8L637 15M637 15L631 15L624 15L617 16M622 -8L616 -3L613 2L608 5M608 5L611 10L617 16M639 17L637 15M613 37L613 30L616 23L617 16M613 37L615 41M615 41L622 41L631 40L638 38M597 3L608 5M590 32L597 34L605 36L613 37M601 64L605 71L607 77L611 84M601 64L608 59L613 52M613 52L618 56L623 61L628 64L634 67M634 67L631 73L628 79L626 84M626 84L618 83L611 84M590 63L601 64M598 100L602 94L607 90L611 84M615 41L613 52M642 64L634 67M632 92L626 84M352 53L360 52M352 53L347 59L342 65L338 71M360 52L364 57L367 61L371 68M348 82L342 77L338 71M348 82L356 80L364 80M364 80L368 73L371 68M374 35L370 40L364 46L360 52M336 35L343 41L348 48L352 53M331 71L338 71M380 68L371 68M346 104L345 97L346 90L348 82M316 104L315 100M315 100L316 95L319 90L321 82L322 77M377 101L373 95L370 91L368 85L364 80M298 65L289 67M315 100L308 99L302 96L295 93M295 93L295 87L291 81L290 74L289 67M257 79L266 83M279 55L283 61L287 66M266 83L271 78L276 75L281 71L287 66M287 66L289 67M725 289L718 286L713 286M712 260L710 262M713 286L712 278L710 270L710 262M691 237L685 243L681 250M681 250L684 257L688 262M688 262L696 263L703 262L710 262M648 330L652 324L657 318M680 340L676 334L675 327L672 322M657 318L664 320L672 322M637 213L635 211M637 213L644 213L650 212L657 213L663 213L669 212M635 211L635 204L635 196M635 196L642 191L646 188L651 183M651 183L659 185L665 188L672 192M672 192L671 198L670 206L669 212M669 212L669 212M617 217L623 216L629 212L635 211M644 237L642 230L640 225L638 219L637 213M660 241L663 235L664 230L666 224L667 219L669 212M621 184L626 189L630 191L635 196M648 167L649 174L651 183M682 185L672 192M687 221L682 217L675 216L669 212M681 250L674 249L667 250M488 79L483 83L479 88L474 93L468 96M500 110L493 110L486 111L480 111M480 111L477 107L473 100L468 96M443 114L448 111M433 86L437 90L443 94L447 98L451 103M448 111L451 103M455 67L457 74L460 81L462 88L464 96M451 103L457 100L464 96M464 96L468 96M488 141L483 136L479 131L475 126M488 141L484 146L478 150L472 156L468 161M455 146L458 156M455 146L458 140L461 133L464 127M464 127L475 126M458 156L468 161M498 141L488 141M480 111L479 119L475 126M473 175L470 166L468 161M438 135L443 138L448 144L455 146M441 164L448 161L453 159L458 156M448 111L453 117L457 123L464 127M271 96L282 101M271 96L264 102L258 108M282 101L282 109L283 116M283 116L277 122L272 126M258 108L260 117L263 124M263 124L272 126M295 93L288 97L282 101M266 83L268 90L271 96M232 100L239 102L245 105L251 107L258 108M306 125L301 123L295 120L289 118L283 116M279 140L277 132L272 126M254 132L259 128L263 124M713 286L705 288L699 291M688 262L688 270L686 275M686 275L690 281L694 285L699 291M702 318L699 312L694 303M699 291L696 297L694 303M672 322L676 317L681 310L685 304M694 303L685 304M665 279L669 281M665 279L658 282L652 286L644 288M669 281L672 289L672 297M672 297L667 299L659 302L654 306M644 288L646 300M646 300L654 306M661 261L662 267L663 272L665 279M686 275L681 278L675 278L669 281M637 281L644 288M685 304L678 301L672 297M657 318L656 311L654 306M624 314L629 311L634 308L641 303L646 300" fill="none" stroke="#5c5e60" stroke-width="1"/>
<polygon points="299.7,60.6 305.7,55.9 310.4,55.9 314.0,59.4 316.4,66.6 323.5,71.3 321.1,78.4 321.1,85.6 324.2,95.0 322.3,96.3 318.7,88.0 314.7,82.0 314.0,73.7 310.4,66.6 308.0,59.4 303.3,63.0" fill="#2e4a68" stroke="#213c5c" stroke-width="1" />
<polygon points="368.6,260.7 373.4,258.4 379.3,262.0 386.5,265.5 392.4,270.3 396.0,276.2 393.6,276.2 387.7,271.4 381.7,267.9 375.8,264.3 371.0,262.6" fill="#2e4a68" stroke="#213c5c" stroke-width="1" />
<polygon points="438.8,377.2 441.1,368.9 447.1,362.9 451.8,365.3 448.3,370.1 444.7,373.6 443.5,378.0" fill="#2e4a68" stroke="#213c5c" stroke-width="1" />
<polygon points="604.2,308.3 608.9,304.7 612.5,305.9 614.9,301.2 613.2,292.8 614.2,285.7 617.3,290.5 619.6,286.9 622.0,291.6 627.5,294.0 622.0,298.8 619.6,304.7 613.7,310.7 607.7,313.0" fill="#2e4a68" stroke="#213c5c" stroke-width="1" />
<polygon points="424.0,413.3 428.0,418.0 426.9,424.0 431.6,428.8 430.4,434.7 428.0,432.4 425.7,426.4 424.0,419.3" fill="#2e4a68" stroke="#213c5c" stroke-width="1" />
<polygon points="526.2,502.5 529.0,509.6 527.9,519.0 531.5,526.2 526.7,531.0 530.3,538.1 535.0,537.0 533.8,528.6 536.2,523.9 531.5,519.0 533.8,507.2 530.3,503.7" fill="#2e4a68" stroke="#213c5c" stroke-width="1" />
<polygon points="540.8,602.3 543.5,611.1 549.6,612.8 554.9,609.3 556.7,603.1 557.6,610.2 563.7,611.1 562.9,613.7 554.9,614.6 547.9,619.9 541.7,617.2" fill="#2e4a68" stroke="#213c5c" stroke-width="1" />
<polygon points="129.4,652.4 134.5,653.5 136.8,658.0 136.0,664.0 132.0,668.0 126.0,668.4 122.5,664.0 122.5,658.0 125.0,654.0" fill="#2e4a68" stroke="#213c5c" stroke-width="1" />
<polygon points="42.3,680.4 46.7,681.3 51.0,686.6 51.9,689.2 47.5,688.4 44.0,684.8" fill="#2e4a68" stroke="#213c5c" stroke-width="1" />
<polygon points="59.0,684.8 61.6,688.4 64.3,695.4 67.8,700.7 73.9,703.3 81.0,705.1 84.5,709.5 80.1,710.4 73.9,707.7 66.9,706.9 62.5,702.5 59.9,695.4 57.2,690.1" fill="#2e4a68" stroke="#213c5c" stroke-width="1" />
<polygon points="144.4,697.2 149.6,695.4 153.2,698.9 154.9,704.2 151.4,708.6 147.0,713.0 142.6,712.1 140.0,708.6 143.5,704.2" fill="#2e4a68" stroke="#213c5c" stroke-width="1" />
<polygon points="784.3,728.9 786.1,734.1 793.1,739.4 796.6,746.5 793.1,755.3 787.8,751.7 784.3,742.9 783.4,734.1" fill="#2e4a68" stroke="#213c5c" stroke-width="1" />
<polygon points="769.3,790.5 774.0,789.0 779.0,790.5 779.0,792.0 769.3,792.0" fill="#2e4a68" stroke="#213c5c" stroke-width="1" />
<polyline points="182.0,6.0 190.0,14.0 197.0,31.0 201.0,47.5 201.0,71.0 200.0,90.0 196.0,100.0 189.0,112.0 185.4,133.0 176.0,147.0 175.0,157.0 166.0,171.0 157.0,185.0 152.0,193.0" fill="none" stroke="#85710c" stroke-width="1" />
<polyline points="152.0,193.0 145.5,203.7 146.2,212.0 152.0,222.7" fill="none" stroke="#85710c" stroke-width="1" />
<polyline points="241.0,6.0 229.0,19.0 228.0,43.0 224.6,59.0 214.0,68.0 201.0,71.0" fill="none" stroke="#85710c" stroke-width="1" />
<polyline points="241.0,6.0 248.0,16.6 255.5,26.0 262.6,38.0 264.0,52.0 270.0,59.4 286.6,60.6 296.0,55.0 310.4,54.7 317.5,59.4 336.6,71.3 362.7,89.0 381.7,109.0 398.4,121.0 405.5,133.0" fill="none" stroke="#85710c" stroke-width="1" />
<polyline points="221.0,193.0 237.7,183.0 270.0,172.3 305.7,161.6 341.3,152.0 369.8,145.0 388.9,139.0 405.5,133.0" fill="none" stroke="#85710c" stroke-width="1" />
<polyline points="473.2,6.0 472.0,23.8 467.3,42.8 455.4,53.5 436.4,59.4 429.3,73.7 422.0,91.5 412.6,107.0 409.0,119.0 405.5,133.0" fill="none" stroke="#85710c" stroke-width="1" />
<polyline points="393.6,99.4 412.6,101.0 431.6,109.0 436.4,123.6 434.0,142.6 429.3,158.0 412.6,164.0 393.6,165.0 379.3,159.0 367.5,145.0 366.3,132.0 374.6,114.0 393.6,99.4" fill="none" stroke="#85710c" stroke-width="1" />
<polyline points="405.5,133.0 417.4,134.3 436.4,132.0 460.0,133.0 484.0,137.9 517.0,136.7 540.0,148.6 559.0,158.0 582.8,161.6 614.9,152.0 620.8,147.4 642.2,149.7 658.8,142.6" fill="none" stroke="#85710c" stroke-width="1" />
<polyline points="405.5,133.0 406.7,142.6 402.0,154.5 400.7,166.4 396.0,183.0 397.2,193.0 399.5,216.8 398.4,238.2 393.6,257.2 397.2,276.2 396.0,300.0 399.5,326.0 402.0,347.5 402.0,368.9 404.3,386.0 405.5,397.9 412.6,416.9 422.1,435.9 431.6,459.7 439.9,471.6 434.0,485.8 422.1,509.6 403.1,538.1 384.1,561.9 376.1,567.0 358.5,581.1 340.8,593.5 323.2,599.6 309.2,606.7 305.6,618.1 305.6,628.7" fill="none" stroke="#85710c" stroke-width="1" />
<polyline points="405.5,133.0 412.6,145.0 428.0,159.0 441.0,176.0 450.6,193.0 457.8,193.0 472.0,212.0 484.0,228.7 493.4,234.6 507.7,237.0 522.0,235.8 540.0,225.1 554.3,207.3 566.1,193.0 580.4,178.3 594.7,161.6 614.9,152.0" fill="none" stroke="#85710c" stroke-width="1" />
<polyline points="587.5,6.0 587.5,21.4 594.7,35.7 604.2,45.2 604.2,61.8 599.4,78.4 604.2,95.0 591.0,110.5 597.0,126.0 609.0,137.9 614.9,148.6 616.5,151.0" fill="none" stroke="#85710c" stroke-width="1" />
<polyline points="658.8,142.6 673.0,132.0 711.0,114.0 742.0,96.3 768.2,83.2 789.6,77.3 806.0,71.3" fill="none" stroke="#85710c" stroke-width="1" />
<polyline points="658.8,142.6 670.7,152.0 673.0,164.0 685.0,176.0 687.4,185.4 701.6,190.0 718.0,193.0 727.8,207.3 737.3,216.8 746.8,218.0 756.3,233.4 761.1,240.5 763.4,254.8 769.4,278.6" fill="none" stroke="#85710c" stroke-width="1" />
<polyline points="701.6,190.0 737.3,183.0 765.8,177.0 796.7,173.5 806.0,176.0" fill="none" stroke="#85710c" stroke-width="1" />
<polyline points="6.0,257.2 35.7,255.3 61.8,251.2 83.2,243.0 111.7,234.6 135.5,225.0 152.0,222.7 164.0,224.0" fill="none" stroke="#85710c" stroke-width="1" />
<polyline points="161.6,221.5 175.9,221.5 175.9,231.0 161.6,231.0 161.6,221.5" fill="none" stroke="#85710c" stroke-width="1" />
<polyline points="175.9,223.9 190.0,214.4 204.4,206.0 218.7,197.8 222.2,193.0" fill="none" stroke="#85710c" stroke-width="1" />
<polyline points="164.0,231.0 166.4,245.3 168.8,264.3 172.3,283.3 171.0,307.0 175.9,330.9 178.3,349.9 183.0,368.9 183.0,386.0 175.9,405.0 164.0,428.8 159.3,457.3 152.0,477.5 142.6,497.7 134.3,519.1 130.7,540.5 130.3,560.0 129.4,577.6 126.8,595.2 125.9,612.8 127.6,630.4 130.3,641.9 135.6,653.3 132.0,674.4" fill="none" stroke="#85710c" stroke-width="1" />
<polyline points="522.0,238.2 533.8,247.7 537.4,262.0 540.0,273.8 544.8,292.8 556.6,311.8 570.9,326.1 580.4,340.4 582.8,354.6" fill="none" stroke="#85710c" stroke-width="1" />
<polyline points="507.7,237.0 498.2,250.0 493.4,271.4 479.2,292.8 464.9,316.6 453.0,333.2 431.6,347.5 417.4,361.8 407.9,373.7 393.6,386.0 372.2,397.9 343.7,402.6 334.2,414.5 317.5,431.2 298.5,450.2 281.9,466.8 270.0,470.4 237.7,474.4" fill="none" stroke="#85710c" stroke-width="1" />
<polyline points="412.6,368.9 436.4,363.0 464.9,364.1 495.8,359.4 522.0,355.8 540.0,352.3 563.8,347.5 582.8,352.0" fill="none" stroke="#85710c" stroke-width="1" />
<polyline points="584.0,294.0 575.7,307.1 570.9,326.1" fill="none" stroke="#85710c" stroke-width="1" />
<polyline points="582.8,354.6 592.3,335.6 611.3,322.5 639.8,311.8 663.6,295.2 687.4,282.1 711.1,273.8 727.8,257.2 746.8,248.9 761.1,240.5 787.2,229.8 806.0,222.7" fill="none" stroke="#85710c" stroke-width="1" />
<polyline points="739.7,254.8 742.0,264.3 769.4,281.0 789.6,292.8 806.0,308.3" fill="none" stroke="#85710c" stroke-width="1" />
<polyline points="582.8,354.6 606.6,357.0 635.1,363.0 670.7,368.9 706.4,371.3 749.2,373.7 768.2,366.5 789.6,354.6 806.0,340.4" fill="none" stroke="#85710c" stroke-width="1" />
<polyline points="593.5,347.0 592.0,353.0 588.0,358.0 584.5,359.5 581.0,358.0 577.0,353.0 575.7,347.0 577.0,340.0 581.0,336.0 584.5,334.5 588.0,336.0 592.0,340.0 593.5,347.0" fill="none" stroke="#85710c" stroke-width="1" />
<polyline points="582.8,354.6 575.7,366.5 563.8,373.7 556.6,386.0 554.3,386.0 547.1,402.6 540.0,414.5 524.3,431.2 510.1,450.2 488.7,462.1 460.2,471.6 439.9,471.6" fill="none" stroke="#85710c" stroke-width="1" />
<polyline points="582.8,354.6 589.9,366.5 599.4,380.8 603.0,386.0 611.3,405.0 628.0,421.7 632.7,435.9 630.3,464.4 630.3,500.0 635.1,523.9 644.6,540.5 650.5,561.1 657.5,592.8 668.1,617.5 682.2,638.6 694.5,645.6 705.1,661.5 713.9,673.8 719.2,686.6 724.4,704.2 738.5,725.3 745.6,742.9 748.2,760.5 752.6,778.2 755.3,792.0" fill="none" stroke="#85710c" stroke-width="1" />
<polyline points="628.0,421.7 644.6,435.9 649.3,445.4 668.4,454.9 687.4,460.9 711.1,466.8 737.3,470.4 763.4,475.1 787.2,483.5 800.3,487.0 806.0,493.0" fill="none" stroke="#85710c" stroke-width="1" />
<polyline points="628.0,421.7 634.0,430.0 632.7,435.9" fill="none" stroke="#85710c" stroke-width="1" />
<polyline points="6.0,460.9 35.7,463.3 66.6,468.0 90.3,476.3 107.0,474.0 133.1,473.5 147.4,478.7 166.4,479.9 197.3,476.3 237.7,474.4" fill="none" stroke="#85710c" stroke-width="1" />
<polyline points="147.4,478.7 148.5,474.0 154.5,469.0" fill="none" stroke="#85710c" stroke-width="1" />
<polyline points="256.7,475.0 247.2,497.7 236.5,516.7 228.2,535.7 216.3,552.4 213.9,579.0 215.0,574.1 208.8,595.2 203.5,611.1 200.0,618.1 193.7,630.4 186.6,648.0 183.1,663.9 169.0,679.7 160.2,685.0 146.1,682.4 132.0,674.4 112.7,671.8 98.6,665.6 91.5,658.6 86.3,646.3" fill="none" stroke="#85710c" stroke-width="1" />
<polyline points="6.2,661.2 15.8,660.4 26.4,656.0 44.0,650.7 66.9,643.6 77.5,644.2 91.5,643.6 105.6,641.3 128.5,640.1 147.9,640.6 162.0,646.3 176.1,653.3 184.9,656.0 200.0,653.3 217.6,648.9 242.3,642.4 270.4,644.5 291.5,638.3 303.9,629.5 312.7,622.5 323.2,624.3 340.8,626.9 358.5,632.2 367.3,637.5 379.6,637.5 390.1,632.2 400.0,623.4 417.6,619.0 444.0,616.3 458.1,621.6 477.5,615.5 498.6,617.2 514.4,615.5 533.8,624.3 554.9,628.7 569.0,634.8 583.1,640.1 600.0,638.3 610.0,639.5 631.1,643.0 652.3,644.8 680.4,652.7 708.6,661.5 736.8,661.5 759.6,658.0 786.1,654.4" fill="none" stroke="#85710c" stroke-width="1" />
<polyline points="6.2,616.3 12.3,625.1 11.4,642.7 15.8,660.4" fill="none" stroke="#85710c" stroke-width="1" />
<polyline points="216.7,560.0 213.9,579.0" fill="none" stroke="#85710c" stroke-width="1" />
<polyline points="803.7,540.0 800.1,566.4 786.1,592.8 784.3,610.4 787.8,638.6 784.3,654.4 791.3,666.8 798.4,677.3 805.4,690.1" fill="none" stroke="#85710c" stroke-width="1" />
<polyline points="779.0,645.6 777.3,659.7 780.8,666.8 791.3,666.8" fill="none" stroke="#85710c" stroke-width="1" />
<polyline points="806.0,535.8 802.7,547.6 801.5,564.3" fill="none" stroke="#85710c" stroke-width="1" />
<polyline points="6.0,105.0 155.7,105.0 160.0,112.0 161.0,118.0 158.0,124.0 152.0,133.0 145.0,141.0 138.0,149.3 187.8,149.3" fill="none" stroke="#000" stroke-width="1" />
<path d="M202.0 6.0Q205.0 14.0 207.4 18.2Q209.8 22.4 209.3 26.9Q208.8 31.2 204.1 30.0Q199.3 28.8 200.2 33.4Q201.2 38.0 204.8 41.3Q208.4 44.5 210.2 49.5Q212.0 54.4 214.0 56.9Q216.0 59.4 217.9 61.0Q219.7 62.7 221.6 56.9Q223.4 51.0 229.5 56.7Q235.6 62.4 233.9 67.1Q232.2 71.8 227.1 75.9Q222.0 80.0 227.1 80.2Q232.1 80.5 229.8 84.4Q227.5 88.3 226.0 94.6Q224.4 100.8 220.4 101.3Q216.4 101.8 215.2 94.3Q214.0 86.9 212.0 93.8Q209.9 100.8 209.2 103.0Q208.5 105.2 206.4 108.1Q204.4 111.1 202.7 108.1Q200.9 105.2 197.5 102.1Q194.1 98.9 197.5 96.7Q200.9 94.5 203.6 96.4Q206.2 98.4 205.4 102.1Q204.7 105.8 203.7 109.0Q202.7 112.2 200.4 114.4Q198.1 116.6 195.6 119.2Q193.2 121.9 198.3 122.5Q203.5 123.2 199.3 125.3Q195.1 127.4 190.1 127.4Q185.1 127.4 193.2 132.9Q201.4 138.5 194.8 137.9Q188.3 137.3 186.8 143.7Q185.2 150.0 190.7 154.8Q196.1 159.6 187.7 158.6Q179.4 157.7 186.0 160.9Q192.7 164.1 187.2 166.8Q181.7 169.5 174.4 170.1Q167.1 170.7 167.0 174.8Q166.8 178.9 174.1 180.6Q181.4 182.3 175.7 183.6Q170.0 184.9 164.1 187.8Q158.2 190.7 167.7 192.5Q177.3 194.3 169.1 192.1Q160.8 189.8 164.6 195.9Q168.3 202.0 158.5 201.0Q148.7 199.9 154.9 205.9Q161.2 211.8 155.4 214.1Q149.7 216.3 159.4 220.6Q169.1 224.9 160.2 226.0Q151.4 227.1 144.9 232.4Q138.5 237.6 144.8 240.8Q151.2 244.0 147.4 248.8Q143.6 253.5 139.1 254.3Q134.5 255.1 131.8 248.5Q129.1 241.8 130.3 249.4Q131.6 257.0 125.0 259.8Q118.3 262.6 126.5 264.6Q134.8 266.7 127.6 268.5Q120.4 270.3 123.1 273.4Q125.9 276.5 126.1 285.4Q126.3 294.3 120.3 293.8Q114.4 293.4 115.0 298.0Q115.6 302.7 111.2 295.8Q106.8 288.9 106.5 298.5Q106.3 308.0 99.0 307.0Q91.7 305.9 100.7 309.1Q109.8 312.3 99.2 313.1Q88.5 313.8 97.7 317.9Q106.9 321.9 100.7 328.6Q94.4 335.2 86.8 330.9Q79.2 326.5 88.0 331.0Q96.8 335.6 88.5 338.6Q80.3 341.6 89.1 345.9Q97.9 350.2 87.6 347.0Q77.3 343.8 86.4 351.7Q95.6 359.5 82.0 355.8Q68.4 352.1 77.0 358.6Q85.6 365.0 77.9 367.5Q70.1 370.0 74.3 374.1Q78.5 378.2 85.3 375.8Q92.2 373.4 84.7 380.4Q77.1 387.4 85.3 389.7Q93.4 392.0 87.4 394.8Q81.4 397.6 77.2 400.7Q73.1 403.9 79.9 409.7Q86.8 415.5 77.9 419.7Q69.0 423.9 80.8 422.3Q92.6 420.8 84.2 426.6Q75.8 432.4 77.3 440.0Q78.8 447.5 89.2 450.1Q99.5 452.6 87.1 456.7Q74.7 460.8 85.1 461.8Q95.5 462.7 101.2 467.8Q106.9 472.9 101.2 477.7Q95.5 482.5 89.6 483.1Q83.8 483.7 89.4 491.1Q95.1 498.5 86.1 496.8Q77.2 495.0 82.7 501.6Q88.2 508.1 83.5 507.8Q78.9 507.5 75.1 513.8Q71.3 520.0 64.6 520.2Q57.8 520.5 68.0 525.0Q78.2 529.5 69.0 527.2Q59.8 524.9 62.1 533.1Q64.5 541.3 57.5 539.3Q50.5 537.3 56.1 544.2Q61.8 551.1 52.0 554.6Q42.3 558.1 50.4 560.0Q58.5 561.8 56.5 564.3Q54.5 566.9 47.5 568.4Q40.4 569.9 44.1 577.2Q47.9 584.5 50.2 587.9Q52.5 591.4 48.2 592.7L44.0 594.0" fill="none" stroke="#000" stroke-width="1"/>
<path d="M224.6 56.0Q226.4 50.5 230.6 45.9Q234.8 41.2 238.6 38.6Q242.5 36.0 245.3 39.2Q248.2 42.5 255.5 44.8Q262.9 47.1 267.3 49.2Q271.7 51.4 273.0 54.2Q274.3 57.1 278.6 55.2Q282.8 53.2 284.0 47.8Q285.1 42.3 278.7 39.3Q272.3 36.3 275.0 30.7Q277.7 25.1 277.9 24.2Q278.2 23.3 286.0 22.4Q293.8 21.4 301.6 20.7Q309.5 20.0 311.2 18.0Q312.9 15.9 308.7 11.0L304.5 6.0" fill="none" stroke="#000" stroke-width="1"/>
<polyline points="208.0,104.6 311.6,104.6 312.5,95.0 310.0,89.0 324.7,91.5 422.0,91.0 540.0,94.6 573.0,96.0 635.0,97.0 700.0,96.5 787.0,95.0 806.0,97.5" fill="none" stroke="#000" stroke-width="1" />
<polyline points="635.0,97.0 651.7,89.0 676.7,82.0 680.2,73.7 695.7,69.0 698.0,60.6 707.6,53.5 708.8,48.7 739.7,34.5 754.0,22.6 763.4,14.3 764.6,12.0 758.7,10.7 751.5,9.5 748.7,6.0" fill="none" stroke="#000" stroke-width="1" />
<polyline points="763.4,14.3 764.6,21.4 771.7,31.0 780.0,36.8 784.8,42.3 794.3,41.0 802.6,38.0 806.0,33.3" fill="none" stroke="#000" stroke-width="1" />
<polyline points="787.2,95.0 783.6,104.6 782.4,118.8 774.1,117.7 765.8,126.0 758.7,139.0 751.5,139.0 744.4,135.5 732.5,139.0 726.6,146.2 718.3,152.0 714.7,145.0 706.4,148.6 694.5,154.5 690.9,166.4 682.6,170.0 668.4,174.7 656.5,183.0 642.2,187.8 627.9,190.0 619.6,193.0 611.3,200.0 608.9,212.0 601.8,216.8 591.0,215.6 588.7,226.3 588.3,238.9" fill="none" stroke="#000" stroke-width="1" />
<polyline points="142.6,238.2 270.0,237.7 400.0,238.2 540.0,238.9 588.3,238.9 677.9,237.7" fill="none" stroke="#000" stroke-width="1" />
<polyline points="677.9,237.7 706.4,229.8 730.2,221.0 744.4,220.3 777.7,221.5 806.0,223.4" fill="none" stroke="#000" stroke-width="1" />
<polyline points="677.9,237.7 676.7,244.1 666.0,252.4 660.7,263.1 673.1,273.8 685.0,283.3 694.5,284.5 701.6,297.6 706.4,311.8 718.3,329.7 734.9,340.4 744.4,354.6 753.9,364.1 763.4,373.7 767.0,386.0 777.7,397.9 789.6,408.6 797.9,416.9 800.3,426.4 805.0,435.9 806.0,445.0" fill="none" stroke="#000" stroke-width="1" />
<polyline points="299.7,237.7 306.8,247.7 303.3,288.0 298.5,335.6 292.6,386.0 287.8,433.5 283.1,464.4 280.7,493.0 279.5,528.6 281.3,560.0 282.7,582.9 284.5,618.1 285.4,648.0" fill="none" stroke="#000" stroke-width="1" />
<polyline points="492.2,239.3 497.0,264.3 505.3,311.8 512.5,359.4 517.2,386.0 522.0,409.8 526.7,431.2 533.8,450.2 540.0,464.4 543.6,481.0 537.4,476.3 540.0,485.8 535.0,488.2 532.7,500.0 533.8,540.5 531.5,557.1 529.4,574.1 535.6,586.4 538.2,595.2 540.8,602.3" fill="none" stroke="#000" stroke-width="1" />
<polyline points="6.0,415.0 78.4,415.0" fill="none" stroke="#000" stroke-width="1" />
<polyline points="44.0,594.0 186.6,594.0 183.1,605.8 177.8,619.9 181.3,633.9 189.3,642.7 193.7,655.0 195.4,665.6 199.0,670.0" fill="none" stroke="#000" stroke-width="1" />
<polyline points="358.5,642.7 355.8,637.5 359.3,632.2 359.3,623.4 349.6,616.3 340.8,605.8 344.4,594.3 400.0,594.3 537.3,594.3" fill="none" stroke="#000" stroke-width="1" />
<polyline points="547.9,620.2 610.0,622.7 671.6,627.1 743.8,631.9 745.6,643.9 748.2,650.9 757.9,650.9 760.5,631.5 757.0,617.5 763.2,609.5 768.5,609.5 786.1,616.6 800.1,619.2" fill="none" stroke="#000" stroke-width="1" />
<polygon points="6.0,704.2 10.6,704.2 14.9,702.7 19.4,701.6 22.3,700.8 26.4,698.9 30.8,701.6 27.8,704.3 26.4,706.9 30.6,706.2 33.5,707.1 36.2,706.7 40.8,706.8 44.0,706.9 47.5,704.2 47.6,707.2 46.5,710.6 46.7,714.8 51.0,718.3 51.9,722.5 52.8,725.3 57.3,726.2 61.6,726.2 64.6,726.9 67.4,726.5 71.3,727.1 72.9,731.0 73.9,734.1 75.6,736.1 77.5,739.4 73.6,739.4 70.4,740.3 65.1,742.9 67.4,746.9 70.4,750.0 73.5,751.9 77.5,752.6 81.6,748.8 84.5,746.5 88.0,741.2 91.4,742.0 95.1,742.9 98.6,748.2 101.3,749.8 105.6,751.7 108.1,753.7 109.2,757.0 114.4,757.0 115.5,752.0 116.2,748.2 119.8,747.1 123.2,744.7 126.3,742.2 130.3,741.2 133.1,743.9 137.3,746.5 139.5,747.6 143.2,750.6 146.1,751.7 147.9,757.0 150.0,760.0 153.5,759.8 157.5,759.3 160.9,760.0 160.9,758.5 164.6,753.6 168.4,750.6 172.0,748.6 175.5,748.5 177.9,747.1 181.9,746.2 185.3,745.6 188.1,747.0 191.7,746.2 195.6,747.4 197.9,749.9 204.0,751.1 207.6,753.9 210.2,755.4 213.9,757.3 213.9,760.0 216.5,759.8 220.9,760.1 224.5,759.3 227.2,760.6 230.9,759.9 234.0,760.8 237.6,759.2 240.9,760.0 240.9,758.5 238.5,754.8 235.3,752.7 231.1,751.1 228.6,746.2 226.2,741.3 221.8,740.8 217.6,741.3 213.9,737.6 210.1,737.9 206.5,738.8 201.6,736.3 201.5,732.8 202.8,728.9 201.6,724.0 200.3,719.1 204.0,714.2 208.9,712.9 210.2,709.2 213.9,705.5 217.0,706.6 221.3,706.8 218.8,701.9 222.5,698.2 222.9,695.5 224.9,692.0 227.4,686.5 227.3,682.5 226.2,678.5 228.0,673.5 229.1,668.1 228.3,671.7 225.6,673.4 221.2,672.6 216.7,674.3 215.0,677.9 209.6,678.8 206.1,677.9 204.3,677.0 202.6,681.4 198.1,684.1 197.2,690.3 195.5,694.3 190.1,695.2 186.6,692.1 185.7,688.1 180.4,689.0 176.8,686.7 176.4,683.2 177.7,680.5 181.3,679.2 185.7,680.5 187.8,677.4 189.3,675.2 191.9,672.0 193.7,669.0 197.2,666.8 200.3,667.3 204.3,666.3 207.9,664.6 209.6,661.0 212.1,658.6 215.0,656.6 216.7,653.9 213.2,653.0 213.2,650.8 218.5,650.8 218.5,655.7 222.1,655.7 226.2,653.7 229.1,652.2 232.5,650.1 235.4,649.1 239.8,647.7 240.2,645.5 244.7,645.1 247.5,646.3 252.2,645.5 253.1,647.7 258.1,651.5 261.7,651.6 267.1,650.5 270.4,649.8 273.2,650.8 277.5,653.3 282.7,651.5 285.8,649.1 289.8,647.1 292.9,649.3 295.4,649.5 298.6,651.5 302.2,651.8 305.6,653.3 305.5,649.9 307.1,645.5 307.4,642.7 306.5,638.9 306.1,634.3 304.8,630.4 307.6,627.2 309.2,625.1 312.7,621.6 316.5,623.4 319.7,624.3 320.9,627.5 320.3,630.0 321.5,633.9 322.1,636.9 322.8,640.3 323.2,644.5 326.3,646.7 328.5,649.8 330.4,653.2 333.8,657.7 335.6,660.4 339.0,659.9 342.4,658.7 346.1,658.6 350.2,658.4 354.4,657.6 358.5,656.0 361.2,655.5 366.1,653.4 369.0,652.0 372.6,651.3 376.7,649.8 379.8,649.7 383.1,648.9 386.2,648.9 390.2,647.6 393.6,647.9 396.6,647.8 400.0,647.3 402.8,647.3 406.8,647.5 410.1,647.2 414.4,646.7 417.6,646.3 421.7,646.1 424.8,647.5 428.4,647.7 431.0,647.9 435.2,648.9 438.9,649.5 441.5,650.8 445.7,652.1 448.5,653.6 452.8,654.2 455.5,656.0 457.9,657.6 461.7,658.9 465.3,660.0 466.8,660.5 470.4,662.1 473.0,664.7 476.1,666.1 479.0,668.1 482.7,670.9 486.4,674.0 488.5,675.9 491.7,677.8 494.6,680.2 497.4,682.7 500.5,684.8 503.6,687.1 507.5,690.1 510.2,692.3 512.8,695.4 514.1,700.5 515.5,704.2 513.4,707.1 512.8,711.3 517.7,710.6 521.6,711.3 526.0,709.0 530.0,710.5 532.6,709.3 536.0,707.0 540.0,708.0 543.0,704.0 546.0,703.5 548.0,706.0 553.0,703.0 558.0,700.0 562.0,698.1 565.6,697.0 568.4,694.6 572.7,693.0 575.9,692.9 579.7,691.9 585.9,691.9 586.8,686.6 581.5,684.8 584.0,681.8 585.0,677.8 590.0,676.7 593.8,674.3 597.9,675.8 600.8,676.0 605.1,674.8 607.6,674.5 611.4,674.3 615.3,676.9 618.8,679.6 621.5,681.9 624.5,682.6 627.6,684.8 630.8,687.1 634.8,689.6 638.2,691.9 639.9,694.9 641.6,698.7 643.5,702.5 645.3,704.9 647.7,707.5 650.5,709.5 654.3,710.7 657.5,713.0 657.4,716.8 656.9,721.4 656.7,725.3 660.2,728.6 662.8,730.6 666.1,731.9 668.7,733.9 671.6,735.9 672.6,740.4 675.1,744.7 677.7,747.9 680.4,750.0 681.0,754.0 682.2,757.0 686.6,756.0 691.0,756.2 694.8,756.1 698.1,756.0 701.5,757.0 700.7,761.2 700.8,763.5 701.5,767.6 704.1,770.5 707.7,774.6 711.3,778.9 713.9,781.7 714.1,785.6 714.5,789.9 713.9,794.0 713.9,806.0 6.0,806.0" fill="#014569" stroke="#000" stroke-width="1.2" />
<polygon points="417.6,644.5 420.2,641.9 426.4,642.7 429.9,638.3 433.5,641.9 444.0,641.0 451.1,640.1 455.5,646.3 451.9,648.9 445.8,645.4 438.7,648.0 429.9,648.0 421.1,647.1" fill="#014569" stroke="#000" stroke-width="1.2" />
<polygon points="343.5,653.3 349.6,651.5 354.9,648.0 358.5,642.7 363.7,644.5 358.5,649.8 353.2,654.6 346.1,657.0" fill="#014569" stroke="#000" stroke-width="1.2" />
<polygon points="369.0,650.3 374.3,644.5 377.8,635.7 376.1,631.3 381.3,634.8 383.1,642.7 386.6,637.5 387.5,630.4 390.1,632.2 389.3,639.2 393.7,642.7 400.0,644.8 400.0,645.8 383.1,647.3" fill="#014569" stroke="#000" stroke-width="1.2" />
<polygon points="473.9,656.0 477.5,663.0 482.7,665.6 488.0,661.2 494.2,658.6 496.0,652.4 498.6,655.0 495.1,662.1 488.0,667.4 486.3,672.7 495.1,674.4 502.1,681.5 507.4,678.0 508.3,679.6 503.9,683.2 498.6,681.5 491.5,676.0 484.5,672.7 479.2,667.4 474.8,662.1" fill="#014569" stroke="#000" stroke-width="1.2" />
<polygon points="806.0,560.0 804.5,563.0 803.0,570.0 804.0,578.0 801.5,586.0 803.5,594.0 802.0,602.0 804.0,612.0 801.5,622.0 803.5,632.0 802.0,642.0 804.0,652.0 803.0,660.0 806.0,664.0" fill="#014569" stroke="#000" stroke-width="1.2" />
<polygon points="13.2,720.0 22.9,716.5 35.2,720.0 38.7,722.7 33.5,727.1 28.2,729.7 19.4,725.3" fill="#5d4f4a" stroke="#000" stroke-width="1.2" />
<polygon points="204.3,677.0 206.1,677.9 209.6,678.8 211.1,679.5 215.0,677.9 216.7,674.3 219.8,672.7 221.2,672.6 223.4,672.8 225.6,673.4 228.3,671.7 229.1,668.1 229.0,671.7 228.0,673.5 225.8,674.5 226.2,678.5 227.7,681.0 227.8,682.2 227.4,686.5 226.0,690.0 224.9,692.0 223.2,695.5 224.6,694.6 222.5,698.2 219.1,700.2 218.8,701.9 221.5,704.0 221.3,706.8 217.9,706.1 214.9,705.0 213.9,705.5 211.9,707.3 210.2,709.2 208.9,712.9 205.6,712.7 204.0,714.2 201.3,716.5 200.3,719.1 200.3,720.0 201.6,724.0 203.3,726.6 202.8,728.9 202.9,730.4 203.6,735.0 201.6,736.3 199.1,735.1 197.3,731.5 197.9,728.9 196.8,728.4 194.2,726.5 193.1,725.0 189.2,724.0 189.7,722.1 188.0,719.1 184.6,718.8 182.5,717.9 181.9,716.0 185.6,716.2 186.8,714.2 188.0,710.5 189.9,709.5 191.7,708.0 190.8,704.4 192.9,702.5 194.2,704.3 197.6,702.2 199.1,700.6 199.3,698.9 201.6,696.9 204.7,699.3 206.5,700.6 207.3,698.0 208.9,695.7 207.7,694.1 206.5,690.8 205.6,687.4 204.6,684.6 204.5,680.6 202.9,680.2" fill="url(#m1)" stroke="#000" stroke-width="2" stroke-linejoin="round"/>
<polygon points="151.7,710.5 155.1,713.0 156.0,712.9 155.6,713.8 158.6,717.7 158.5,719.1 161.0,720.6 162.9,723.5 164.6,725.2 167.3,725.5 169.3,727.4 172.0,728.9 174.3,732.0 176.5,732.4 176.9,733.9 178.8,734.9 179.7,735.8 183.1,738.8 185.2,739.8 187.1,742.9 189.6,743.5 191.7,744.9 191.7,746.2 188.5,744.9 186.3,745.2 184.4,747.6 181.9,746.2 179.9,745.9 178.1,748.2 175.1,749.1 172.0,748.6 170.9,750.7 167.9,752.4 167.7,751.4 164.6,753.6 163.5,756.7 160.9,758.5 160.4,756.1 160.1,754.8 159.7,751.1 158.2,749.6 156.6,746.2 156.4,744.8 158.1,741.2 157.2,738.8 156.5,737.5 156.0,733.9 153.6,731.0 153.5,729.0 151.9,725.6 149.2,724.0 150.8,721.1 151.2,719.0 151.7,717.8 150.9,715.0 151.7,713.0" fill="url(#m2)" stroke="#000" stroke-width="1.6" />
<polygon points="140.0,746.5 141.8,747.2 144.9,749.9 145.9,750.9 147.4,753.6 145.7,755.8 146.0,758.5 144.0,759.2 140.0,758.5 140.6,755.4 140.1,753.2 139.2,750.4 139.3,749.9" fill="url(#m2)" stroke="#000" stroke-width="1.6" />
<polygon points="84.5,741.2 87.5,742.3 90.6,743.2 93.1,743.6 95.1,742.9 95.6,745.5 98.6,748.2 102.1,749.8 104.3,749.5 105.6,751.7 107.3,753.7 109.2,757.0 108.0,759.0 105.8,759.2 102.0,758.3 100.4,760.1 99.3,758.1 97.0,758.1 94.2,758.0 90.3,760.0 88.4,758.3 88.1,760.0 84.5,759.0 82.5,758.5 81.6,756.1 80.0,754.0 80.6,752.1 82.7,748.0 83.8,746.9 84.9,742.9" fill="url(#m2)" stroke="#000" stroke-width="1.8" />
<polygon points="114.4,757.0 115.6,755.6 115.3,752.0 114.5,750.8 116.2,748.2 118.5,747.7 120.5,746.6 123.2,744.7 125.0,744.3 128.5,742.1 130.3,741.2 132.7,743.4 134.2,744.9 137.3,746.5 140.3,747.2 142.5,749.6 144.8,750.0 146.1,751.7 145.9,755.1 147.9,757.0 147.9,759.0 146.5,758.9 142.4,758.2 141.6,758.5 140.1,759.2 136.0,759.4 134.1,760.1 133.3,759.0 130.4,759.5 128.6,760.2 124.3,758.6 123.6,758.5 121.3,757.9 119.9,759.1 115.6,759.4 114.4,759.0" fill="url(#m2)" stroke="#000" stroke-width="1.8" />
<polyline points="201.6,736.3 202.4,737.3 204.5,738.3 206.5,738.8 208.7,737.2 208.7,739.2 211.3,737.1 213.9,737.6 217.2,739.4 217.6,741.3 220.8,741.2 222.3,740.3 224.5,742.4 226.2,741.3 227.1,743.7 228.3,743.3 228.6,746.2 230.2,748.1 229.7,748.1 231.1,751.1 234.0,751.9 235.5,754.1 237.3,755.1 238.5,754.8 239.4,757.6 240.9,758.5 239.2,758.9 238.9,755.5 235.1,755.0 236.0,754.8 233.4,753.5 231.5,752.8 229.4,752.5 228.6,752.6 227.3,751.8 226.2,751.1 224.1,747.7 223.1,749.2 221.7,747.2 219.5,745.2 218.3,745.4 215.1,743.0 215.2,744.9 211.4,743.4 210.8,740.6 208.8,741.5 209.0,738.5 206.7,737.6 205.4,737.6" fill="none" stroke="#000" stroke-width="3" />
<polyline points="528.7,714.8 533.9,720.0 542.7,716.5 551.5,713.0 558.6,707.7 565.6,702.5 570.0,697.5" fill="none" stroke="#000" stroke-width="1.4" />
<polyline points="506.7,695.4 507.5,704.2 511.1,712.1" fill="none" stroke="#000" stroke-width="1.4" />
<polyline points="228.0,662.0 235.0,664.5" fill="none" stroke="#000" stroke-width="1.4" />
<polyline points="240.0,665.0 251.0,665.5" fill="none" stroke="#000" stroke-width="1.4" />
<polyline points="258.0,662.0 270.0,664.0 285.0,665.5" fill="none" stroke="#000" stroke-width="1.4" />
<polyline points="312.7,663.9 325.0,662.5 335.6,660.4" fill="none" stroke="#000" stroke-width="1.4" />
<polyline points="296.0,664.5 306.0,663.5" fill="none" stroke="#000" stroke-width="1.4" />
<polyline points="249.0,678.5 252.6,682.2 254.5,688.3 253.9,695.7 251.4,703.1 248.3,708.0 244.6,711.7 242.2,715.4 238.5,717.2" fill="none" stroke="#000" stroke-width="1.4" />
<polyline points="237.3,721.6 233.6,725.2" fill="none" stroke="#000" stroke-width="1.4" />
<polyline points="228.6,727.7 223.7,731.4" fill="none" stroke="#000" stroke-width="1.4" />
<polyline points="240.9,700.6 244.6,696.9 249.6,693.2" fill="none" stroke="#000" stroke-width="1.4" />
<polyline points="229.0,662.0 234.0,661.5 232.0,664.5 229.0,662.0" fill="none" stroke="#000" stroke-width="1.4" />
<polyline points="241.0,664.0 246.0,662.5 243.0,665.0" fill="none" stroke="#000" stroke-width="1.4" />
<polyline points="249.0,662.0 252.0,661.0" fill="none" stroke="#000" stroke-width="1.4" />
<polyline points="257.0,662.0 260.0,662.5" fill="none" stroke="#000" stroke-width="1.4" />
<polyline points="417.6,646.8 435.2,649.4 452.8,654.7" fill="none" stroke="#000" stroke-width="1.4" />
<polyline points="786.0,652.7 784.3,663.2 787.8,670.3 783.5,675.0 785.5,680.0 787.8,683.1 793.1,686.6 791.3,693.6 794.9,702.5 789.6,709.5 789.6,716.5 784.3,721.8 784.3,728.9" fill="none" stroke="#000" stroke-width="4" />
<polyline points="786.0,652.7 784.3,663.2 787.8,670.3 783.5,675.0 785.5,680.0 787.8,683.1 793.1,686.6 791.3,693.6 794.9,702.5 789.6,709.5 789.6,716.5 784.3,721.8 784.3,728.9" fill="none" stroke="#014569" stroke-width="2.2" />
<polyline points="793.9,565.5 795.8,565.0 798.1,562.3 799.3,562.8 801.0,560.8 804.0,559.8 806.7,558.8" fill="none" stroke="#000" stroke-width="2.2" />
<polyline points="796.8,566.5 799.1,563.8 800.3,564.3 802.0,562.3 805.0,561.3 807.7,560.3" fill="none" stroke="#014569" stroke-width="1.2" />
<polyline points="791.1,569.9 792.6,570.8 794.5,567.9 797.1,565.5 800.0,562.7 802.6,563.2 804.3,562.7 807.1,561.3" fill="none" stroke="#000" stroke-width="1.6" />
<polyline points="796.2,572.2 798.2,573.1 801.0,570.5 802.4,568.4 805.4,567.3" fill="none" stroke="#000" stroke-width="2.2" />
<polyline points="792.8,576.3 795.5,575.7 797.7,574.4 799.3,572.8 802.1,570.0 803.8,569.5 806.3,569.4" fill="none" stroke="#000" stroke-width="1.6" />
<polyline points="796.5,577.2 798.7,575.9 800.3,574.3 803.1,571.5 804.8,571.0 807.3,570.9" fill="none" stroke="#014569" stroke-width="1.2" />
<polyline points="797.1,579.7 799.4,579.7 800.9,580.2 803.2,578.4 804.5,579.0 807.5,576.4" fill="none" stroke="#000" stroke-width="1.2" />
<polyline points="790.4,581.8 792.1,582.0 794.9,579.2 797.2,576.4 799.7,574.8 802.4,575.9 804.6,577.1 806.3,574.4" fill="none" stroke="#000" stroke-width="2.2" />
<polyline points="797.5,585.3 800.5,583.5 802.2,583.4 805.1,581.8" fill="none" stroke="#000" stroke-width="1.6" />
<polyline points="801.5,585.0 803.2,584.9 806.1,583.3" fill="none" stroke="#014569" stroke-width="1.2" />
<polyline points="797.1,589.3 798.9,588.3 801.1,588.0 803.4,587.3 805.7,588.3" fill="none" stroke="#000" stroke-width="2.2" />
<polyline points="794.7,591.1 797.2,592.1 799.2,590.2 800.9,588.6 803.5,589.7 805.3,588.3" fill="none" stroke="#000" stroke-width="2.2" />
<polyline points="789.5,595.1 791.9,594.0 794.3,592.5 796.8,592.6 798.0,589.9 800.4,590.9 802.1,589.8 804.3,588.2 806.2,586.5" fill="none" stroke="#000" stroke-width="1.6" />
<polyline points="792.9,595.5 795.3,594.0 797.8,594.1 799.0,591.4 801.4,592.4 803.1,591.3 805.3,589.7 807.2,588.0" fill="none" stroke="#014569" stroke-width="1.2" />
<polyline points="791.4,598.7 794.0,596.1 796.7,597.2 799.1,594.8 801.2,594.5 802.9,592.9 805.3,592.6" fill="none" stroke="#000" stroke-width="1.2" />
<polyline points="791.9,600.4 793.7,600.9 795.7,601.5 797.2,599.9 799.6,600.6 801.6,598.6 803.0,597.8 804.5,598.2 807.2,596.0" fill="none" stroke="#000" stroke-width="1.6" />
<polyline points="796.5,604.1 797.8,603.7 800.1,602.5 802.2,603.0 804.2,602.7 806.0,602.1" fill="none" stroke="#000" stroke-width="1.2" />
<polyline points="798.8,605.2 801.1,604.0 803.2,604.5 805.2,604.2 807.0,603.6" fill="none" stroke="#014569" stroke-width="1.2" />
<polyline points="790.4,608.4 791.6,609.4 794.4,610.5 796.4,611.5 799.2,609.5 801.8,610.0 804.2,609.2 805.9,607.6" fill="none" stroke="#000" stroke-width="1.2" />
<polyline points="796.7,611.5 799.7,609.0 801.3,606.2 804.0,605.3 805.5,606.0" fill="none" stroke="#000" stroke-width="1.6" />
<polyline points="789.1,614.2 791.7,611.9 793.4,611.7 795.5,610.4 798.4,610.0 800.2,608.0 803.0,607.0 805.6,605.5" fill="none" stroke="#000" stroke-width="1.2" />
<polyline points="792.7,613.4 794.4,613.2 796.5,611.9 799.4,611.5 801.2,609.5 804.0,608.5 806.6,607.0" fill="none" stroke="#014569" stroke-width="1.2" />
<polyline points="797.0,616.4 798.4,614.5 800.1,615.2 801.5,616.1 803.6,615.5 805.5,615.6" fill="none" stroke="#000" stroke-width="1.2" />
<polyline points="793.7,619.9 795.7,618.9 798.3,615.9 799.6,613.5 801.0,610.8 804.0,611.3 805.3,610.4" fill="none" stroke="#000" stroke-width="1.6" />
<polyline points="789.6,622.9 791.5,621.6 793.3,619.7 796.3,618.5 797.7,615.5 800.2,615.8 802.4,613.0 804.4,612.7 806.6,612.4" fill="none" stroke="#000" stroke-width="1.2" />
<polyline points="792.5,623.1 794.3,621.2 797.3,620.0 798.7,617.0 801.2,617.3 803.4,614.5 805.4,614.2 807.6,613.9" fill="none" stroke="#014569" stroke-width="1.2" />
<polyline points="792.9,627.0 794.8,626.1 797.2,624.9 799.7,623.8 801.3,623.1 803.8,620.4 805.7,619.2" fill="none" stroke="#000" stroke-width="1.2" />
<polyline points="792.4,630.9 795.2,631.2 796.9,630.1 798.3,630.6 800.7,631.3 803.3,631.1 805.8,630.5" fill="none" stroke="#000" stroke-width="1.2" />
<polyline points="795.4,633.8 797.5,631.8 799.4,631.0 801.6,630.8 803.5,631.2 805.3,631.8" fill="none" stroke="#000" stroke-width="1.2" />
<polyline points="798.5,633.3 800.4,632.5 802.6,632.3 804.5,632.7 806.3,633.3" fill="none" stroke="#014569" stroke-width="1.2" />
<polyline points="795.1,637.1 797.8,638.1 800.0,638.4 801.3,638.7 803.4,638.7 804.8,638.8 807.7,636.1" fill="none" stroke="#000" stroke-width="1.6" />
<polyline points="790.6,640.3 792.0,641.5 794.3,640.4 796.8,641.4 798.4,640.9 801.3,640.3 804.3,638.8 805.9,639.7" fill="none" stroke="#000" stroke-width="2.2" />
<polyline points="792.7,643.7 795.0,643.2 797.8,643.0 799.3,641.7 802.1,639.4 804.2,638.4 806.7,639.4" fill="none" stroke="#000" stroke-width="2.2" />
<polyline points="796.0,644.7 798.8,644.5 800.3,643.2 803.1,640.9 805.2,639.9 807.7,640.9" fill="none" stroke="#014569" stroke-width="1.2" />
<polyline points="790.7,646.4 792.4,644.3 794.6,642.6 796.2,642.5 799.1,640.7 801.6,639.5 804.4,638.9 806.0,636.8" fill="none" stroke="#000" stroke-width="1.2" />
<polyline points="796.2,648.7 797.8,648.1 799.4,647.2 802.2,645.9 804.6,645.9 806.2,645.3" fill="none" stroke="#000" stroke-width="2.2" />
<polyline points="793.3,652.5 795.8,653.1 797.7,653.2 800.7,652.2 802.3,650.1 804.8,650.0 807.7,650.6" fill="none" stroke="#000" stroke-width="1.2" />
<polyline points="796.8,654.6 798.7,654.7 801.7,653.7 803.3,651.6 805.8,651.5 808.7,652.1" fill="none" stroke="#014569" stroke-width="1.2" />
<polyline points="796.0,656.4 797.4,656.0 799.8,653.1 802.7,650.9 804.0,648.6 805.4,649.0" fill="none" stroke="#000" stroke-width="1.2" />
<polyline points="796.5,658.0 798.2,656.5 800.5,656.3 801.7,654.7 803.7,653.8 805.3,653.2" fill="none" stroke="#000" stroke-width="1.6" />
</g>
<g clip-path="url(#mc)" fill="none" shape-rendering="crispEdges">
<circle cx="407" cy="407" r="159.5" stroke="#dedede" stroke-width="1"/>
<circle cx="407" cy="407" r="279.5" stroke="#dedede" stroke-width="1"/>
<circle cx="407" cy="407" r="399.5" stroke="#dedede" stroke-width="1"/>
<circle cx="407" cy="407" r="519.5" stroke="#dedede" stroke-width="1"/>
<circle cx="407" cy="407" r="39.5" stroke="#f00000" stroke-width="1"/>
<line x1="526.5" y1="24.5" x2="533" y2="24.5" stroke="#ff8c00" stroke-width="1.2"/>
</g>
<rect x="395" y="2" width="21" height="10" fill="#5d4f4a" clip-path="url(#mc)"/>
<text class="m" x="405.5" y="10.8" font-size="11.5" fill="#ffff99" text-anchor="middle" clip-path="url(#mc)">313</text>
<rect x="395" y="122.5" width="21" height="10" fill="#5d4f4a" clip-path="url(#mc)"/>
<text class="m" x="405.5" y="131.3" font-size="11.5" fill="#ffff99" text-anchor="middle" clip-path="url(#mc)">219</text>
<rect x="395" y="242.5" width="21" height="10" fill="#5d4f4a" clip-path="url(#mc)"/>
<text class="m" x="405.5" y="251.3" font-size="11.5" fill="#ffff99" text-anchor="middle" clip-path="url(#mc)">125</text>
<rect x="398.5" y="362.5" width="14" height="10" fill="#5d4f4a"/>
<text class="m" x="405.5" y="371.5" font-size="11.5" fill="#ffff99" text-anchor="middle">31</text>
<rect x="9.5" y="758.5" width="243" height="44" fill="#000" stroke="#888"/>
<text x="13.5" y="770.6" font-size="9.5" fill="#dde6f0" class="t" textLength="36" lengthAdjust="spacingAndGlyphs">Symbols</text>
<text x="52" y="770.6" font-size="9.5" fill="#dde6f0" class="t" textLength="18" lengthAdjust="spacingAndGlyphs">-CG</text>
<text x="77.5" y="770.6" font-size="9.5" fill="#dde6f0" class="t" textLength="15" lengthAdjust="spacingAndGlyphs">-IC</text>
<text x="98" y="770.6" font-size="9.5" fill="#dde6f0" class="t" textLength="21" lengthAdjust="spacingAndGlyphs">+CG</text>
<text x="123" y="770.6" font-size="9.5" fill="#dde6f0" class="t" textLength="18" lengthAdjust="spacingAndGlyphs">+IC</text>
<text x="153" y="770.6" font-size="9.5" fill="#dde6f0" class="t" textLength="90" lengthAdjust="spacingAndGlyphs">Strike age color codes</text>
<text x="13.5" y="783.6" font-size="9.5" fill="#dde6f0" class="t" textLength="29" lengthAdjust="spacingAndGlyphs">Recent</text>
<text x="13.5" y="796.6" font-size="9.5" fill="#dde6f0" class="t" textLength="14" lengthAdjust="spacingAndGlyphs">Old</text>
<circle cx="60.5" cy="780.5" r="3.6" fill="none" stroke="#00e5ee"/><line x1="58" y1="780.5" x2="63" y2="780.5" stroke="#00e5ee"/>
<line x1="82" y1="780.5" x2="89" y2="780.5" stroke="#00e5ee" stroke-width="1.2"/>
<circle cx="110.5" cy="780.5" r="3.6" fill="none" stroke="#00e5ee"/><path d="M108 780.5h5M110.5 778.0v5" stroke="#00e5ee" fill="none"/>
<path d="M131.5 780.5h7M135 777.0v7" stroke="#00e5ee" fill="none" stroke-width="1.2"/>
<circle cx="60.5" cy="793.5" r="3.6" fill="none" stroke="#f0f000"/><line x1="58" y1="793.5" x2="63" y2="793.5" stroke="#f0f000"/>
<line x1="82" y1="793.5" x2="89" y2="793.5" stroke="#f0f000" stroke-width="1.2"/>
<circle cx="110.5" cy="793.5" r="3.6" fill="none" stroke="#f0f000"/><path d="M108 793.5h5M110.5 791.0v5" stroke="#f0f000" fill="none"/>
<path d="M131.5 793.5h7M135 790.0v7" stroke="#f0f000" fill="none" stroke-width="1.2"/>
<text x="153" y="783.6" font-size="9.5" fill="#f0e000" class="t" textLength="16" lengthAdjust="spacingAndGlyphs">15+</text>
<text x="188" y="783.6" font-size="9.5" fill="#f0b000" class="t" textLength="16" lengthAdjust="spacingAndGlyphs">30+</text>
<text x="223" y="783.6" font-size="9.5" fill="#f09000" class="t" textLength="16" lengthAdjust="spacingAndGlyphs">45+</text>
<text x="153" y="796.6" font-size="9.5" fill="#e87800" class="t" textLength="16" lengthAdjust="spacingAndGlyphs">60+</text>
<text x="188" y="796.6" font-size="9.5" fill="#e85800" class="t" textLength="16" lengthAdjust="spacingAndGlyphs">75+</text>
<text x="223" y="796.6" font-size="9.5" fill="#e82800" class="t" textLength="16" lengthAdjust="spacingAndGlyphs">90+</text>
<rect x="685.5" y="791.8" width="121" height="15" fill="#000"/>
<text x="689" y="801.6" font-size="9.5" fill="#fff" class="t" textLength="113" lengthAdjust="spacingAndGlyphs">©2005 Astrogenic Systems</text>
<rect x="812.5" y="8.5" width="318.5" height="318.5" rx="6" fill="#000" stroke="#c8c8c8"/>
<rect x="812.5" y="333.5" width="318.5" height="113" rx="6" fill="#000" stroke="#c8c8c8"/>
<rect x="812.5" y="453.5" width="318.5" height="348" rx="6" fill="#000" stroke="#c8c8c8"/>
<rect x="819.5" y="16.5" width="57" height="17" fill="#5a0000" stroke="#c8c8c8"/>
<text x="848" y="29.5" font-size="12.5" fill="#ffd8d8" class="b" text-anchor="middle" textLength="48" lengthAdjust="spacingAndGlyphs">STRIKE</text>
<rect x="883.5" y="16.5" width="57" height="17" fill="#333" stroke="#aaa"/>
<text x="912" y="29.5" font-size="12.5" fill="#c8c8c8" class="b" text-anchor="middle" textLength="43" lengthAdjust="spacingAndGlyphs">NOISE</text>
<rect x="994.5" y="16.5" width="127.5" height="17" fill="#333" stroke="#c8c8c8"/>
<text x="999" y="29.5" font-size="12.5" fill="#fff" class="b" textLength="52" lengthAdjust="spacingAndGlyphs">Bng 17°</text>
<text x="1118" y="29.5" font-size="12.5" fill="#00e400" class="b" text-anchor="end" textLength="42" lengthAdjust="spacingAndGlyphs">313mi</text>
<rect x="821.5" y="64.5" width="81" height="14.5" fill="#555" stroke="#999"/>
<text x="862.0" y="76" font-size="11.5" fill="#fff" text-anchor="middle" textLength="65" lengthAdjust="spacingAndGlyphs">Strikes/min</text>
<rect x="931.5" y="64.5" width="81" height="14.5" fill="#555" stroke="#999"/>
<text x="972.0" y="76" font-size="11.5" fill="#fff" text-anchor="middle" textLength="57" lengthAdjust="spacingAndGlyphs">Close/min</text>
<rect x="1041.5" y="64.5" width="81" height="14.5" fill="#555" stroke="#999"/>
<text x="1082.0" y="76" font-size="11.5" fill="#fff" text-anchor="middle" textLength="63" lengthAdjust="spacingAndGlyphs">Noises/min</text>
<text x="903" y="111.5" font-size="27.5" fill="#fff" text-anchor="end" font-weight="bold">0</text>
<text x="1013" y="111.5" font-size="27.5" fill="#fff" text-anchor="end" font-weight="bold">0</text>
<text x="1123" y="111.5" font-size="27.5" fill="#b8b8b8" text-anchor="end" font-weight="bold">0</text>
<text x="902.5" y="142.7" font-size="12" fill="#fff" text-anchor="end" textLength="76.5" lengthAdjust="spacingAndGlyphs">Total Strikes</text>
<text x="1012.5" y="142.7" font-size="12" fill="#fff" text-anchor="end" textLength="68.5" lengthAdjust="spacingAndGlyphs">Total Close</text>
<text x="1122.5" y="142.7" font-size="12" fill="#c0c0c0" text-anchor="end" textLength="75" lengthAdjust="spacingAndGlyphs">Total Noises</text>
<text x="902.5" y="161" font-size="12" fill="#fff" text-anchor="end">5</text>
<text x="1012.5" y="161" font-size="12" fill="#fff" text-anchor="end">0</text>
<text x="1122.5" y="161" font-size="12" fill="#c0c0c0" text-anchor="end">24</text>
<text x="821" y="215" font-size="12" fill="#c8c8c8" textLength="164.5" lengthAdjust="spacingAndGlyphs">Lightning type distribution</text>
<line x1="821" y1="217.5" x2="1123.5" y2="217.5" stroke="#888"/>
<text x="821" y="237" font-size="12" fill="#fff" class="b" textLength="84" lengthAdjust="spacingAndGlyphs">Cloud-ground</text>
<text x="912.3" y="237" font-size="12" fill="#fff">+</text>
<rect x="925.5" y="227.5" width="50.5" height="10.5" rx="2" fill="#000" stroke="#999"/>
<rect x="926.5" y="228.5" width="9.5" height="8.5" fill="#ff0000"/>
<text x="979.5" y="237" font-size="12" fill="#fff" class="b" textLength="28.5" lengthAdjust="spacingAndGlyphs">20%</text>
<text x="1015.5" y="237" font-size="12" fill="#fff" class="b">−</text>
<rect x="1028.5" y="227.5" width="50.5" height="10.5" rx="2" fill="#000" stroke="#999"/>
<rect x="1029.5" y="228.5" width="9.5" height="8.5" fill="#99ccff"/>
<text x="1082.5" y="237" font-size="12" fill="#fff" class="b" textLength="28.5" lengthAdjust="spacingAndGlyphs">20%</text>
<text x="821" y="261" font-size="12" fill="#d0d0d0" textLength="38" lengthAdjust="spacingAndGlyphs">Count</text>
<text x="925.5" y="261" font-size="12" fill="#fff" class="b">1</text>
<text x="1029" y="261" font-size="12" fill="#fff" class="b">1</text>
<text x="821" y="291" font-size="12" fill="#fff" class="b" textLength="63" lengthAdjust="spacingAndGlyphs">Intracloud</text>
<text x="912.3" y="291" font-size="12" fill="#fff">+</text>
<rect x="925.5" y="281.5" width="50.5" height="10.5" rx="2" fill="#000" stroke="#999"/>
<rect x="926.5" y="282.5" width="9.5" height="8.5" fill="#f060a8"/>
<text x="979.5" y="291" font-size="12" fill="#fff" class="b" textLength="28.5" lengthAdjust="spacingAndGlyphs">20%</text>
<text x="1015.5" y="291" font-size="12" fill="#fff" class="b">−</text>
<rect x="1028.5" y="281.5" width="50.5" height="10.5" rx="2" fill="#000" stroke="#999"/>
<rect x="1029.5" y="282.5" width="19.5" height="8.5" fill="#00ff00"/>
<text x="1082.5" y="291" font-size="12" fill="#fff" class="b" textLength="28.5" lengthAdjust="spacingAndGlyphs">40%</text>
<text x="821" y="315" font-size="12" fill="#d0d0d0" textLength="38" lengthAdjust="spacingAndGlyphs">Count</text>
<text x="925.5" y="315" font-size="12" fill="#fff" class="b">1</text>
<text x="1029" y="315" font-size="12" fill="#fff" class="b">2</text>
<text x="821.5" y="353" font-size="16" fill="#00f000" class="b" textLength="202" lengthAdjust="spacingAndGlyphs">1/30/2026 5:34:52 AM</text>
<line x1="821" y1="358.5" x2="1123" y2="358.5" stroke="#888"/>
<text x="821" y="388" font-size="12" fill="#fff" textLength="48.1" lengthAdjust="spacingAndGlyphs">Squelch</text>
<text x="909.5" y="388" font-size="12" fill="#fff">0</text>
<text x="981" y="388" font-size="12" fill="#fff" textLength="43.8" lengthAdjust="spacingAndGlyphs">Upload</text>
<text x="1061" y="388" font-size="12" fill="#c0c0c0" textLength="53.4" lengthAdjust="spacingAndGlyphs">Disabled</text>
<text x="821" y="408" font-size="12" fill="#fff" textLength="72.3" lengthAdjust="spacingAndGlyphs">Persistence</text>
<text x="909.5" y="408" font-size="12" fill="#fff" textLength="40.8" lengthAdjust="spacingAndGlyphs">90 min</text>
<text x="981" y="408" font-size="12" fill="#fff" textLength="50.2" lengthAdjust="spacingAndGlyphs">Capture</text>
<text x="1061" y="408" font-size="12" fill="#00e400" textLength="35.9" lengthAdjust="spacingAndGlyphs">Active</text>
<text x="821" y="428" font-size="12" fill="#fff" textLength="39.4" lengthAdjust="spacingAndGlyphs">Range</text>
<text x="909.5" y="428" font-size="12" fill="#fff" textLength="41.4" lengthAdjust="spacingAndGlyphs">313 mi</text>
<text x="981" y="428" font-size="12" fill="#fff" textLength="52.5" lengthAdjust="spacingAndGlyphs">Receiver</text>
<text x="1061" y="428" font-size="12" fill="#00e400" textLength="50.2" lengthAdjust="spacingAndGlyphs">Enabled</text>
<text x="821" y="475" font-size="12" fill="#c8c8c8" textLength="43.2" lengthAdjust="spacingAndGlyphs">Uptime</text>
<text x="909.5" y="475" font-size="12" fill="#fff" textLength="43.8" lengthAdjust="spacingAndGlyphs">449:19</text>
<text x="981" y="475" font-size="12" fill="#c8c8c8" textLength="61.3" lengthAdjust="spacingAndGlyphs">Peak time</text>
<text x="1061" y="475" font-size="12" fill="#c8c8c8" textLength="23.3" lengthAdjust="spacingAndGlyphs">Plot</text>
<text x="821" y="498" font-size="12" fill="#c8c8c8" textLength="60.1" lengthAdjust="spacingAndGlyphs">Peak rate</text>
<text x="909.5" y="498" font-size="12" fill="#fff" textLength="33.5" lengthAdjust="spacingAndGlyphs">2/min</text>
<text x="981" y="498" font-size="12" fill="#fff" textLength="50.2" lengthAdjust="spacingAndGlyphs">4:12 AM</text>
<text x="1061" y="498" font-size="12" fill="#fff" textLength="35" lengthAdjust="spacingAndGlyphs">Strike</text>
<text x="822.5" y="528" font-size="12" fill="#c8c8c8" textLength="75.6" lengthAdjust="spacingAndGlyphs">Trend graph</text>
<text x="908" y="528" font-size="12" fill="#fff" textLength="41.4" lengthAdjust="spacingAndGlyphs">60 min</text>
<path d="M1088.5 542.5V777.5H822.5" fill="none" stroke="#c8c8c8"/>
<line x1="1084" y1="542.5" x2="1088.5" y2="542.5" stroke="#c8c8c8"/>
<line x1="1084" y1="581.5" x2="1088.5" y2="581.5" stroke="#c8c8c8"/>
<line x1="1084" y1="620.5" x2="1088.5" y2="620.5" stroke="#c8c8c8"/>
<line x1="1084" y1="659.5" x2="1088.5" y2="659.5" stroke="#c8c8c8"/>
<line x1="1084" y1="698.5" x2="1088.5" y2="698.5" stroke="#c8c8c8"/>
<line x1="1084" y1="738.5" x2="1088.5" y2="738.5" stroke="#c8c8c8"/>
<line x1="822.5" y1="773.5" x2="822.5" y2="777.5" stroke="#c8c8c8"/>
<line x1="866.5" y1="773.5" x2="866.5" y2="777.5" stroke="#c8c8c8"/>
<line x1="911.5" y1="773.5" x2="911.5" y2="777.5" stroke="#c8c8c8"/>
<line x1="955.5" y1="773.5" x2="955.5" y2="777.5" stroke="#c8c8c8"/>
<line x1="999.5" y1="773.5" x2="999.5" y2="777.5" stroke="#c8c8c8"/>
<line x1="1044.5" y1="773.5" x2="1044.5" y2="777.5" stroke="#c8c8c8"/>
<line x1="1088.5" y1="773.5" x2="1088.5" y2="777.5" stroke="#c8c8c8"/>
<text x="1092.3" y="546.5" font-size="11" fill="#c8c8c8" class="t">30</text>
<text x="1092.3" y="625" font-size="11" fill="#c8c8c8" class="t">20</text>
<text x="1092.3" y="703" font-size="11" fill="#c8c8c8" class="t">10</text>
<text x="820.5" y="792.6" font-size="11" fill="#c8c8c8" class="t">60</text>
<text x="864.7" y="792.6" font-size="11" fill="#c8c8c8" class="t">50</text>
<text x="909" y="792.6" font-size="11" fill="#c8c8c8" class="t">40</text>
<text x="953.5" y="792.6" font-size="11" fill="#c8c8c8" class="t">30</text>
<text x="997.5" y="792.6" font-size="11" fill="#c8c8c8" class="t">20</text>
<text x="1041.6" y="792.6" font-size="11" fill="#c8c8c8" class="t">10</text>
<text x="1087.7" y="792.6" font-size="11" fill="#c8c8c8" class="t">0</text>
<text x="1100.3" y="792.6" font-size="11" fill="#c8c8c8" class="t">min</text>
</svg></body></html>
